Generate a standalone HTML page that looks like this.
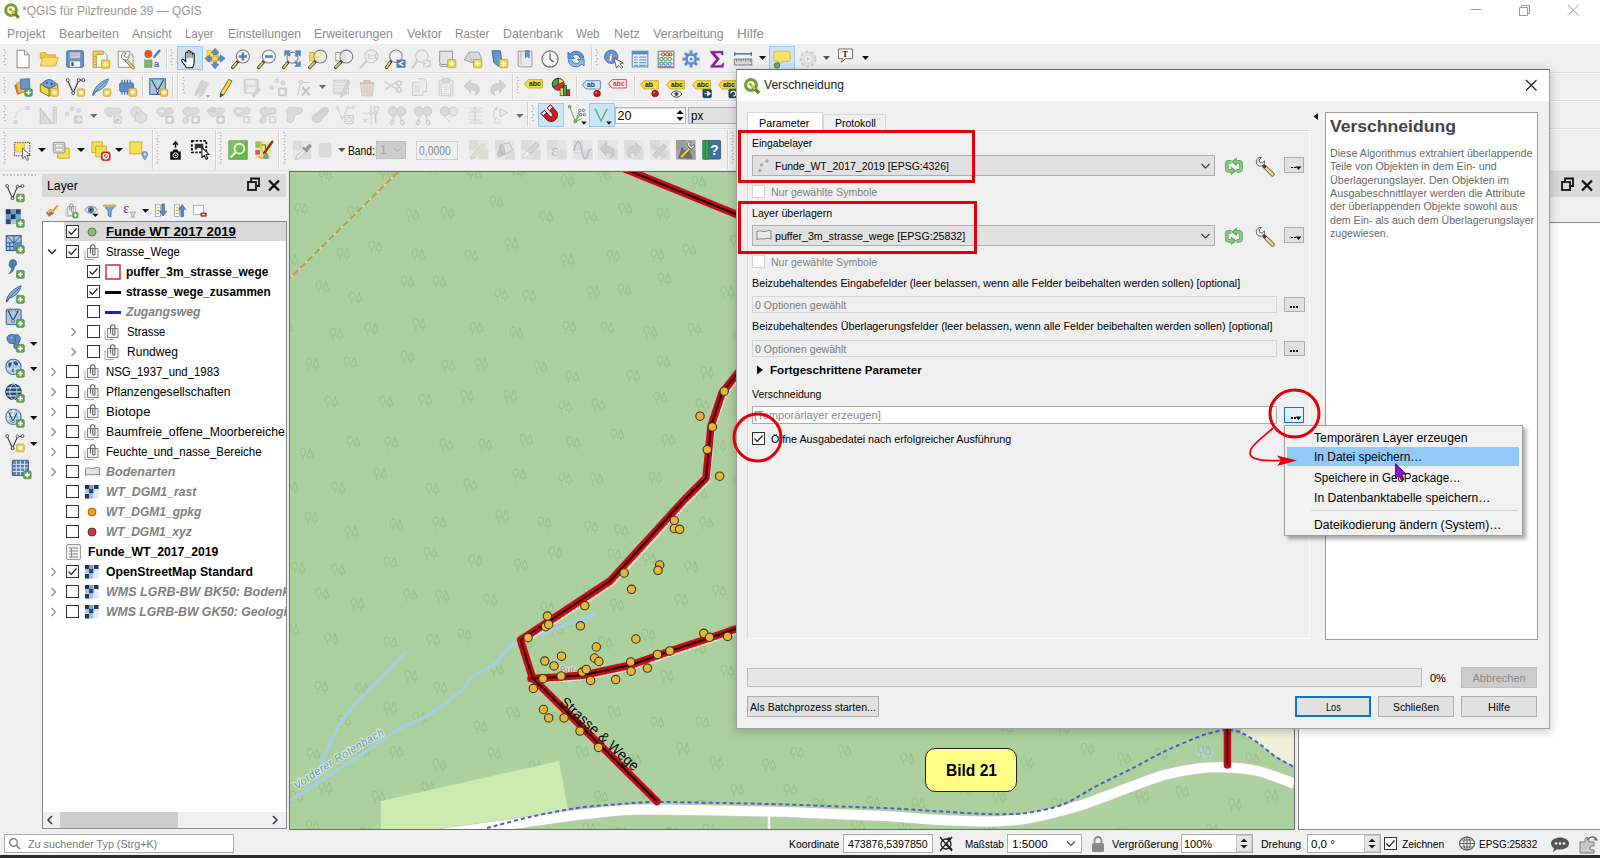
<!DOCTYPE html>
<html lang="de"><head><meta charset="utf-8"><title>QGIS</title>
<style>
html,body{margin:0;padding:0}
body{width:1600px;height:858px;overflow:hidden;position:relative;background:#f0f0f0;font-family:"Liberation Sans","DejaVu Sans",sans-serif}
.a{position:absolute;box-sizing:border-box;display:block}
.t{position:absolute;white-space:nowrap;line-height:20px;height:20px}
svg{overflow:visible}
</style></head><body>
<div class="a" style="left:0px;top:0px;width:1600px;height:44px;background:#ffffff;"></div>
<div class="a" style="left:0px;top:44px;width:1600px;height:128px;background:#f0f0f0;"></div>
<div class="a" style="left:0px;top:72px;width:1600px;height:1px;background:#dcdcdc;"></div>
<div class="a" style="left:0px;top:73px;width:1600px;height:1px;background:#fafafa;"></div>
<div class="a" style="left:0px;top:100px;width:1600px;height:1px;background:#dcdcdc;"></div>
<div class="a" style="left:0px;top:101px;width:1600px;height:1px;background:#fafafa;"></div>
<div class="a" style="left:0px;top:128px;width:1600px;height:1px;background:#dcdcdc;"></div>
<div class="a" style="left:0px;top:129px;width:1600px;height:1px;background:#fafafa;"></div>
<div class="a" style="left:0px;top:170px;width:1600px;height:1px;background:#e4e4e4;"></div>
<span class="t" id="t1" style="left:22px;top:1px;font-size:13px;color:#999999;transform:scaleX(0.9184);transform-origin:0 50%;">*QGIS für Pilzfreunde 39 — QGIS</span>
<svg class="a" style="left:2.5px;top:2px;" width="17" height="17" viewBox="0 0 20 20"><circle cx="9.5" cy="9.5" r="6.3" fill="none" stroke="#6aa32d" stroke-width="3.6"/>
<path d="M11 11 L18.5 18.5" stroke="#4d8a23" stroke-width="3.6" stroke-linecap="butt"/>
<path d="M9 9 L13 13" stroke="#f0c02c" stroke-width="2.4" stroke-linecap="round"/>
<circle cx="8.8" cy="8.8" r="1.6" fill="#ee7913"/></svg>
<svg class="a" style="left:1470px;top:0px;" width="130" height="22" viewBox="0 0 130 22"><path d="M0.500 9.500H11.500" stroke="#999" stroke-width="1"/>
<path d="M49.500 7.500h8v8h-8z M51.500 7.500v-2h8v8h-2" fill="none" stroke="#999" stroke-width="1"/>
<path d="M98 5l10.500 10.500M108.500 5l-10.500 10.500" stroke="#999" stroke-width="1"/></svg>
<span class="t" id="t2" style="left:7px;top:24px;font-size:13px;color:#8d8d8d;transform:scaleX(0.9500);transform-origin:0 50%;">Projekt</span>
<span class="t" id="t3" style="left:59px;top:24px;font-size:13px;color:#8d8d8d;transform:scaleX(0.9524);transform-origin:0 50%;">Bearbeiten</span>
<span class="t" id="t4" style="left:132px;top:24px;font-size:13px;color:#8d8d8d;transform:scaleX(0.9302);transform-origin:0 50%;">Ansicht</span>
<span class="t" id="t5" style="left:185px;top:24px;font-size:13px;color:#8d8d8d;transform:scaleX(0.8788);transform-origin:0 50%;">Layer</span>
<span class="t" id="t6" style="left:228px;top:24px;font-size:13px;color:#8d8d8d;transform:scaleX(0.9359);transform-origin:0 50%;">Einstellungen</span>
<span class="t" id="t7" style="left:314px;top:24px;font-size:13px;color:#8d8d8d;transform:scaleX(0.9405);transform-origin:0 50%;">Erweiterungen</span>
<span class="t" id="t8" style="left:407px;top:24px;font-size:13px;color:#8d8d8d;transform:scaleX(0.9459);transform-origin:0 50%;">Vektor</span>
<span class="t" id="t9" style="left:455px;top:24px;font-size:13px;color:#8d8d8d;transform:scaleX(0.8947);transform-origin:0 50%;">Raster</span>
<span class="t" id="t10" style="left:503px;top:24px;font-size:13px;color:#8d8d8d;transform:scaleX(0.9524);transform-origin:0 50%;">Datenbank</span>
<span class="t" id="t11" style="left:576px;top:24px;font-size:13px;color:#8d8d8d;transform:scaleX(0.8889);transform-origin:0 50%;">Web</span>
<span class="t" id="t12" style="left:614px;top:24px;font-size:13px;color:#8d8d8d;transform:scaleX(0.9630);transform-origin:0 50%;">Netz</span>
<span class="t" id="t13" style="left:653px;top:24px;font-size:13px;color:#8d8d8d;transform:scaleX(0.9595);transform-origin:0 50%;">Verarbeitung</span>
<span class="t" id="t14" style="left:737px;top:24px;font-size:13px;color:#8d8d8d;transform:scaleX(1.0385);transform-origin:0 50%;">Hilfe</span>
<div class="a" style="left:0px;top:830px;width:1600px;height:25px;background:#f0f0f0;"></div>
<div class="a" style="left:0px;top:855px;width:1600px;height:3px;background:#2b2b2b;"></div>
<div class="a" style="left:4px;top:834px;width:230px;height:19px;background:#fff;border:1px solid #adadad;"></div>
<svg class="a" style="left:8px;top:837px;" width="14" height="14" viewBox="0 0 14 14"><circle cx="5.5" cy="5.5" r="3.8" fill="none" stroke="#7a7a7a" stroke-width="1.3"/><path d="M8.3 8.3L12 12" stroke="#7a7a7a" stroke-width="1.5"/></svg>
<span class="t" id="t15" style="left:28px;top:834px;font-size:11px;color:#7a7a7a;transform:scaleX(0.9773);transform-origin:0 50%;">Zu suchender Typ (Strg+K)</span>
<span class="t" id="t16" style="left:789px;top:834px;font-size:11px;color:#000;transform:scaleX(0.9434);transform-origin:0 50%;">Koordinate</span>
<div class="a" style="left:843px;top:834px;width:90px;height:19px;background:#fff;border:1px solid #adadad;"></div>
<span class="t" id="t17" style="left:848px;top:834px;font-size:11px;color:#000;transform:scaleX(0.9639);transform-origin:0 50%;">473876,5397850</span>
<span class="t" id="t18" style="left:965px;top:834px;font-size:11px;color:#000;transform:scaleX(0.9070);transform-origin:0 50%;">Maßstab</span>
<div class="a" style="left:1007px;top:834px;width:75px;height:19px;background:#fff;border:1px solid #adadad;"></div>
<span class="t" id="t19" style="left:1012px;top:834px;font-size:11px;color:#000;transform:scaleX(1.0588);transform-origin:0 50%;">1:5000</span>
<svg class="a" style="left:1066px;top:840px;" width="10" height="8" viewBox="0 0 10 8"><path d="M1 1.5L5 5.5L9 1.5" fill="none" stroke="#444" stroke-width="1.1"/></svg>
<span class="t" id="t20" style="left:1112px;top:834px;font-size:11px;color:#000;transform:scaleX(0.9851);transform-origin:0 50%;">Vergrößerung</span>
<div class="a" style="left:1181px;top:834px;width:72px;height:19px;background:#fff;border:1px solid #adadad;"></div>
<span class="t" id="t21" style="left:1184px;top:834px;font-size:11px;color:#000;transform:scaleX(1.0000);transform-origin:0 50%;">100%</span>
<span class="t" id="t22" style="left:1261px;top:834px;font-size:11px;color:#000;transform:scaleX(0.9524);transform-origin:0 50%;">Drehung</span>
<div class="a" style="left:1307px;top:834px;width:74px;height:19px;background:#fff;border:1px solid #adadad;"></div>
<span class="t" id="t23" style="left:1311px;top:834px;font-size:11px;color:#000;transform:scaleX(1.0435);transform-origin:0 50%;">0,0 °</span>
<div class="a" style="left:1236px;top:835px;width:16px;height:17px;background:#e6e6e6;border:1px solid #c8c8c8;"></div>
<svg class="a" style="left:1239px;top:837px;" width="10" height="13" viewBox="0 0 10 13"><path d="M1.5 5L5 1.5L8.5 5z M1.5 8L5 11.5L8.5 8z" fill="#222"/></svg>
<div class="a" style="left:1364px;top:835px;width:16px;height:17px;background:#e6e6e6;border:1px solid #c8c8c8;"></div>
<svg class="a" style="left:1367px;top:837px;" width="10" height="13" viewBox="0 0 10 13"><path d="M1.5 5L5 1.5L8.5 5z M1.5 8L5 11.5L8.5 8z" fill="#222"/></svg>
<div class="a" style="left:1384px;top:837px;width:13px;height:13px;background:#fff;border:1px solid #333;"></div>
<svg class="a" style="left:1384px;top:837px;" width="13" height="13" viewBox="0 0 13 13"><path d="M2.5 6.5L5.3 9.3L10.5 3.5" fill="none" stroke="#222" stroke-width="1.2"/></svg>
<span class="t" id="t24" style="left:1402px;top:834px;font-size:11px;color:#000;transform:scaleX(0.9333);transform-origin:0 50%;">Zeichnen</span>
<svg class="a" style="left:1457px;top:834px;" width="20" height="19" viewBox="0 0 20 19"><ellipse cx="10" cy="9.5" rx="7.5" ry="6.5" fill="#f4f4f4" stroke="#555" stroke-width="1.1"/><ellipse cx="10" cy="9.5" rx="3.3" ry="6.5" fill="none" stroke="#555" stroke-width="0.9"/><path d="M2.5 9.5h15M4 6h12M4 13h12M10 3v13" stroke="#555" stroke-width="0.9"/></svg>
<span class="t" id="t25" style="left:1479px;top:834px;font-size:11px;color:#000;transform:scaleX(0.9062);transform-origin:0 50%;">EPSG:25832</span>
<svg class="a" style="left:1549px;top:835px;" width="22" height="19" viewBox="0 0 22 19"><path d="M2 8.5c0-3.6 4-6 9-6s9 2.4 9 6-4 6-9 6c-1 0-2-.1-2.8-.3L4 17l1-4C3.200 12 2 10.400 2 8.500z" fill="#555"/><circle cx="7" cy="8.500" r="1.300" fill="#fff"/><circle cx="11" cy="8.500" r="1.300" fill="#fff"/><circle cx="15" cy="8.500" r="1.300" fill="#fff"/></svg>
<svg class="a" style="left:1577px;top:834px;" width="22" height="20" viewBox="0 0 22 20"><path d="M3 8h5v-2.500a2 2 0 1 1 4 0V8h5v4h-2a2 2 0 1 0 0 4h2v3H3z" fill="#c9c9c9" stroke="#777" stroke-width="1"/><path d="M10 6c4-5 9-3 10 0l-3-.5" fill="none" stroke="#666" stroke-width="1.300"/></svg>
<svg class="a" style="left:936px;top:834px;" width="20" height="20" viewBox="0 0 20 20"><path d="M4 3l12 14M16 3L4 17" stroke="#222" stroke-width="1.400"/><circle cx="10" cy="10" r="5" fill="none" stroke="#222" stroke-width="1.300"/><path d="M10 10l6 6" stroke="#222" stroke-width="2.200"/><circle cx="13" cy="5" r="1.800" fill="#222"/></svg>
<svg class="a" style="left:1090px;top:834px;" width="16" height="20" viewBox="0 0 16 20"><rect x="2" y="9" width="12" height="9" rx="1.500" fill="#8a8a8a"/><path d="M4.500 9V6.500a3.500 3.500 0 0 1 7 0V9" fill="none" stroke="#8a8a8a" stroke-width="1.800"/></svg>
<svg class="a" style="left:3px;top:49px;" width="3" height="19" viewBox="0 0 3 19"><rect x="0.6" y="0" width="1.300" height="1.300" fill="#b0b0b0"/><rect x="1.4" y="3" width="1.300" height="1.300" fill="#b0b0b0"/><rect x="0.6" y="6" width="1.300" height="1.300" fill="#b0b0b0"/><rect x="1.4" y="9" width="1.300" height="1.300" fill="#b0b0b0"/><rect x="0.6" y="12" width="1.300" height="1.300" fill="#b0b0b0"/><rect x="1.4" y="15" width="1.300" height="1.300" fill="#b0b0b0"/></svg>
<svg class="a" style="left:11.5px;top:47.5px;" width="22.080000000000002" height="22.080000000000002" viewBox="0 0 24 24"><path d="M5.500 2.500h8l5 5v14h-13z" fill="#fff" stroke="#8a8a8a" stroke-width="1.100" stroke-linejoin="round"/><path d="M13.500 2.500v5h5" fill="#eee" stroke="#8a8a8a" stroke-width="1"/></svg>
<svg class="a" style="left:37.5px;top:47.5px;" width="22.080000000000002" height="22.080000000000002" viewBox="0 0 24 24"><path d="M2.500 6.500a1.500 1.500 0 0 1 1.500-1.500h4.500l2 2.500h8.500v4h-16.500z" fill="#eec84a" stroke="#d4a92c" stroke-width="1"/><path d="M2.500 19.500l2.500-9.500h17l-3 9.500z" fill="#f9dc64" stroke="#d9b23a" stroke-width="1" stroke-linejoin="round"/></svg>
<svg class="a" style="left:63.5px;top:47.5px;" width="22.080000000000002" height="22.080000000000002" viewBox="0 0 24 24"><rect x="3" y="3" width="18" height="18" rx="2" fill="#6c96c6" stroke="#3e6ca3" stroke-width="1.100"/><rect x="6.500" y="4.500" width="11" height="6.500" fill="#d8d8d8" stroke="#9a9a9a" stroke-width="0.600"/><path d="M7.500 6.500h9M7.500 8.500h9" stroke="#a8a8a8" stroke-width="1"/><rect x="6.500" y="14.500" width="11" height="6" fill="#f4f4f4"/><rect x="8" y="15.500" width="2.500" height="4" fill="#2b4c77"/></svg>
<svg class="a" style="left:89.5px;top:47.5px;" width="22.080000000000002" height="22.080000000000002" viewBox="0 0 24 24"><path d="M3.500 3.500h11l4 4v13.500h-15z" fill="#fbfbfb" stroke="#9a9a9a" stroke-width="1"/><path d="M3.500 3.500h11v3.500h-7.500v14h-3.500z" fill="#f2d65a" stroke="#c9a52a" stroke-width="1"/><path d="M5 9h1.500M5 12h1.500M5 15h1.500M5 18h1.500M9 5v1.200M12 5v1.200" stroke="#b08a1a" stroke-width="0.800"/><rect x="12.5" y="13" width="9" height="9" rx="1.200" fill="#ecd040" stroke="#c9a52a" stroke-width="0.900"/><path d="M17 14.4v6.2M13.9 17.5h6.2M14.8 15.3l4.4 4.4M19.2 15.3l-4.4 4.4" stroke="#fffdf0" stroke-width="1.050"/></svg>
<svg class="a" style="left:115.0px;top:47.5px;" width="22.080000000000002" height="22.080000000000002" viewBox="0 0 24 24"><path d="M3.500 3.500h12l4 4v13.500h-16z" fill="#fbfbfb" stroke="#8f8f8f" stroke-width="1"/><path d="M15.500 3.500v4h4" fill="#e8e8e8" stroke="#8f8f8f" stroke-width="0.900"/><path d="M13 12l8 8.500a1.500 1.500 0 0 1-2.200 2L11 14z" fill="#e8cf6a" stroke="#7d6a2a" stroke-width="0.900"/><path d="M7.500 7a3.800 3.800 0 0 1 5-1.500l-2.300 2.300l.8 2l2 .5l2.200-2.200a3.800 3.800 0 0 1-5.200 4.700a3.800 3.800 0 0 1-2.500-5.800z" fill="#f0f0f0" stroke="#6b6b6b" stroke-width="0.900"/></svg>
<svg class="a" style="left:140.5px;top:47.5px;" width="22.080000000000002" height="22.080000000000002" viewBox="0 0 24 24"><circle cx="8" cy="6.500" r="4.300" fill="#e1552b"/><rect x="4" y="13" width="8" height="8" fill="#78b37a" stroke="#5a9a5c" stroke-width="0.600"/><path d="M14.500 9.500l5.500-6.500" stroke="#4f7fb8" stroke-width="2.600" stroke-linecap="round"/><text x="14.200" y="21" font-size="10" font-family="Liberation Sans,sans-serif" fill="#333">a</text></svg>
<div class="a" style="left:166px;top:47px;width:1px;height:23px;background:#d2d2d2;"></div>
<div class="a" style="left:167px;top:47px;width:1px;height:23px;background:#fbfbfb;"></div>
<svg class="a" style="left:170px;top:49px;" width="3" height="19" viewBox="0 0 3 19"><rect x="0.6" y="0" width="1.300" height="1.300" fill="#b0b0b0"/><rect x="1.4" y="3" width="1.300" height="1.300" fill="#b0b0b0"/><rect x="0.6" y="6" width="1.300" height="1.300" fill="#b0b0b0"/><rect x="1.4" y="9" width="1.300" height="1.300" fill="#b0b0b0"/><rect x="0.6" y="12" width="1.300" height="1.300" fill="#b0b0b0"/><rect x="1.4" y="15" width="1.300" height="1.300" fill="#b0b0b0"/></svg>
<div class="a" style="left:177px;top:46px;width:26px;height:24px;background:#cce4f7;border:1px solid #99c9ef;"></div>
<svg class="a" style="left:178.5px;top:47.5px;" width="22.080000000000002" height="22.080000000000002" viewBox="0 0 24 24"><path d="M8.300 21.500c-1.800-2.300-4-5.200-5.200-7.400c-.7-1.400 1-2.500 2.200-1.200l2 2.300V5.700c0-1.700 2.300-1.700 2.300 0V4c0-1.700 2.400-1.700 2.400 0v1.300c0-1.600 2.300-1.600 2.300 0v1.600c0-1.500 2.200-1.500 2.200 0v8.600c0 2.500-.9 4.300-1.700 6z" fill="#fff" stroke="#111" stroke-width="1.150" stroke-linejoin="round"/><path d="M9.600 6V11M12 5.500V11M14.300 7V11" stroke="#111" stroke-width="0.800"/></svg>
<svg class="a" style="left:204.0px;top:47.5px;" width="22.080000000000002" height="22.080000000000002" viewBox="0 0 24 24"><rect x="3.200" y="2.800" width="12" height="12" fill="#f5e04e" stroke="#d9b82e" stroke-width="0.800"/><path d="M12 0.300l4 5.200h-2.300v2h-3.400v-2h-2.300zM12 22.700l4-5.200h-2.300v-2h-3.400v2h-2.300zM1 11.500l5.200-4v2.300h2v3.400h-2v2.300zM23 11.500l-5.200-4v2.300h-2v3.400h2v2.300z" fill="#5b8cc4" stroke="#3f6da3" stroke-width="0.700" stroke-linejoin="round"/><rect x="9.800" y="9.300" width="4.400" height="4.400" fill="#f5e04e" stroke="#c9a52a" stroke-width="0.700"/></svg>
<svg class="a" style="left:229.5px;top:47.5px;" width="22.080000000000002" height="22.080000000000002" viewBox="0 0 24 24"><path d="M8.746 14.554L2.800 21.200" stroke="#3a3a2a" stroke-width="3.400" stroke-linecap="round"/><path d="M7.146 16.154L3.100 20.900" stroke="#f0d24a" stroke-width="1.900" stroke-linecap="round"/><circle cx="14" cy="9.3" r="7.1" fill="#f4f4f4" stroke="#7c7c7c" stroke-width="1.150"/><path d="M14 5v8.600M9.700 9.300h8.600" stroke="#4f7fc0" stroke-width="2.700"/></svg>
<svg class="a" style="left:255.5px;top:47.5px;" width="22.080000000000002" height="22.080000000000002" viewBox="0 0 24 24"><path d="M8.746 14.554L2.800 21.200" stroke="#3a3a2a" stroke-width="3.400" stroke-linecap="round"/><path d="M7.146 16.154L3.100 20.900" stroke="#f0d24a" stroke-width="1.900" stroke-linecap="round"/><circle cx="14" cy="9.3" r="7.1" fill="#f4f4f4" stroke="#7c7c7c" stroke-width="1.150"/><path d="M9.700 9.300h8.600" stroke="#5b87c0" stroke-width="2.900"/></svg>
<svg class="a" style="left:281.0px;top:47.5px;" width="22.080000000000002" height="22.080000000000002" viewBox="0 0 24 24"><path d="M8.06 14.94L2.800 21.200" stroke="#3a3a2a" stroke-width="3.400" stroke-linecap="round"/><path d="M6.46 16.54L3.100 20.900" stroke="#f0d24a" stroke-width="1.900" stroke-linecap="round"/><circle cx="12.5" cy="10.5" r="6" fill="#f4f4f4" stroke="#7c7c7c" stroke-width="1.150"/><path d="M4 3h6l-2 2l2.500 2.500l-1.500 1.500l-2.500-2.500l-2.500 2zM21 3v6l-2-2l-2.500 2.500l-1.500-1.500l2.500-2.500l-2-2.500zM21 20h-6l2-2l-2.500-2.500l1.500-1.500l2.500 2.500l2.500-2z" fill="#5b8cc4" stroke="#3f6da3" stroke-width="0.700"/></svg>
<svg class="a" style="left:307.0px;top:47.5px;" width="22.080000000000002" height="22.080000000000002" viewBox="0 0 24 24"><rect x="3" y="5" width="8" height="9" fill="#f5e04e" stroke="#c9a52a" stroke-width="0.800"/><path d="M9.32 14.48L2.800 21.200" stroke="#3a3a2a" stroke-width="3.400" stroke-linecap="round"/><path d="M7.72 16.08L3.100 20.900" stroke="#f0d24a" stroke-width="1.900" stroke-linecap="round"/><circle cx="14.5" cy="9.3" r="7" fill="#f6f4e6" stroke="#7c7c7c" stroke-width="1.150"/><path d="M14.500 2.900a6.400 6.400 0 0 0 0 12.800z" fill="#efe6a8" opacity="0.800"/></svg>
<svg class="a" style="left:332.5px;top:47.5px;" width="22.080000000000002" height="22.080000000000002" viewBox="0 0 24 24"><rect x="3" y="5" width="8" height="9" fill="#f4f4f4" stroke="#8a8a8a" stroke-width="0.900"/><path d="M9.32 14.48L2.800 21.200" stroke="#3a3a2a" stroke-width="3.400" stroke-linecap="round"/><path d="M7.72 16.08L3.100 20.900" stroke="#f0d24a" stroke-width="1.900" stroke-linecap="round"/><circle cx="14.5" cy="9.3" r="7" fill="#f7f7f7" stroke="#7c7c7c" stroke-width="1.150"/><path d="M14.500 2.900a6.400 6.400 0 0 0 0 12.800z" fill="#dcdcdc" opacity="0.800"/></svg>
<svg class="a" style="left:358.0px;top:47.5px;" width="22.080000000000002" height="22.080000000000002" viewBox="0 0 24 24"><path d="M9.32 14.18L2.800 21.200" stroke="#cfcfcf" stroke-width="2.600" stroke-linecap="round"/><circle cx="14.5" cy="9" r="7" fill="#eeeeee" stroke="#c8c8c8" stroke-width="1.200"/><text x="9.600" y="12" font-size="8" font-weight="bold" font-family="Liberation Sans,sans-serif" fill="#c9c9c9">1:1</text></svg>
<svg class="a" style="left:384.0px;top:47.5px;" width="22.080000000000002" height="22.080000000000002" viewBox="0 0 24 24"><path d="M7.968 14.032L2.800 21.200" stroke="#3a3a2a" stroke-width="3.400" stroke-linecap="round"/><path d="M6.368 15.632L3.100 20.900" stroke="#f0d24a" stroke-width="1.900" stroke-linecap="round"/><circle cx="13" cy="9" r="6.8" fill="#eef1f5" stroke="#8a8a8a" stroke-width="1.150"/><rect x="14" y="13" width="9" height="8" fill="#4f7fb8" stroke="#3f6da3" stroke-width="0.600"/><path d="M21 14.500l-4.500 2.500l4.500 2.500" fill="none" stroke="#fff" stroke-width="1.500"/></svg>
<svg class="a" style="left:410.0px;top:47.5px;" width="22.080000000000002" height="22.080000000000002" viewBox="0 0 24 24"><path d="M7.968 14.032L2.800 21.200" stroke="#cfcfcf" stroke-width="2.600" stroke-linecap="round"/><circle cx="13" cy="9" r="6.8" fill="#eeeeee" stroke="#c8c8c8" stroke-width="1.200"/><rect x="14" y="13" width="9" height="8" fill="#d4d4d4"/><path d="M16 14.500l4.500 2.500l-4.500 2.500" fill="none" stroke="#f6f6f6" stroke-width="1.500"/></svg>
<svg class="a" style="left:436.0px;top:47.5px;" width="22.080000000000002" height="22.080000000000002" viewBox="0 0 24 24"><path d="M4 3.500h14v14.500h-11.500a2.500 2.500 0 0 1-2.500-2.500z" fill="#e4e4e4" stroke="#8f8f8f" stroke-width="1"/><path d="M4 17.500a2 2 0 0 0 2 2.500h12" fill="none" stroke="#8f8f8f" stroke-width="1"/><rect x="12.5" y="12.5" width="9" height="9" rx="1.200" fill="#ecd040" stroke="#c9a52a" stroke-width="0.900"/><path d="M17 13.9v6.2M13.9 17h6.2M14.8 14.8l4.4 4.4M19.2 14.8l-4.4 4.4" stroke="#fffdf0" stroke-width="1.050"/></svg>
<svg class="a" style="left:462.0px;top:47.5px;" width="22.080000000000002" height="22.080000000000002" viewBox="0 0 24 24"><path d="M2.500 13l5-8.500h11l3 8.500l-8 3.500z" fill="#d9d9d9" stroke="#9a9a9a" stroke-width="1" stroke-linejoin="round"/><path d="M7.500 4.500l2 8l12 .5M9.500 12.500l4 4" fill="none" stroke="#b0b0b0" stroke-width="0.800"/><rect x="12.5" y="12.5" width="9" height="9" rx="1.200" fill="#ecd040" stroke="#c9a52a" stroke-width="0.900"/><path d="M17 13.9v6.2M13.9 17h6.2M14.8 14.8l4.4 4.4M19.2 14.8l-4.4 4.4" stroke="#fffdf0" stroke-width="1.050"/></svg>
<svg class="a" style="left:488.0px;top:47.5px;" width="22.080000000000002" height="22.080000000000002" viewBox="0 0 24 24"><path d="M6 3h9v12.500l-4.500 4.500l-4.500-4.500z" fill="#6a95c6" stroke="#3f6da3" stroke-width="1" stroke-linejoin="round" transform="skewX(8) translate(-2 0)"/><rect x="12.5" y="12.5" width="9" height="9" rx="1.200" fill="#ecd040" stroke="#c9a52a" stroke-width="0.900"/><path d="M17 13.9v6.2M13.9 17h6.2M14.8 14.8l4.4 4.4M19.2 14.8l-4.4 4.4" stroke="#fffdf0" stroke-width="1.050"/></svg>
<svg class="a" style="left:513.5px;top:47.5px;" width="22.080000000000002" height="22.080000000000002" viewBox="0 0 24 24"><path d="M4.500 3.500h15v17h-12.500a2.500 2.500 0 0 1-2.500-2.500z" fill="#e9e9e9" stroke="#8f8f8f" stroke-width="1"/><path d="M7.500 3.500v14.500" stroke="#b5b5b5" stroke-width="1"/><path d="M12.500 3h4v8l-2-2l-2 2z" fill="#6a95c6" stroke="#3f6da3" stroke-width="0.800"/></svg>
<svg class="a" style="left:539.0px;top:47.5px;" width="22.080000000000002" height="22.080000000000002" viewBox="0 0 24 24"><circle cx="12" cy="12" r="8.800" fill="#fafafa" stroke="#707070" stroke-width="1.300"/><path d="M12 6v6.200l4 3.300" fill="none" stroke="#555" stroke-width="1.300"/><path d="M12 4v1.500M12 18.500v1.500M4 12h1.500M18.500 12h1.500" stroke="#999" stroke-width="0.900"/></svg>
<svg class="a" style="left:565.0px;top:47.5px;" width="22.080000000000002" height="22.080000000000002" viewBox="0 0 24 24"><path d="M20.500 11a8.500 8.500 0 0 0-15-4.500l-2.300-2.200v7.200h7.200l-2.500-2.500a5 5 0 0 1 8.800 2z" fill="#5b96d8" stroke="#2f6fb5" stroke-width="0.900" stroke-linejoin="round"/><path d="M3.500 13a8.500 8.500 0 0 0 15 4.500l2.300 2.200v-7.200h-7.200l2.500 2.500a5 5 0 0 1-8.800-2z" fill="#8fbcea" stroke="#2f6fb5" stroke-width="0.900" stroke-linejoin="round"/></svg>
<div class="a" style="left:591px;top:47px;width:1px;height:23px;background:#d2d2d2;"></div>
<div class="a" style="left:592px;top:47px;width:1px;height:23px;background:#fbfbfb;"></div>
<svg class="a" style="left:595px;top:49px;" width="3" height="19" viewBox="0 0 3 19"><rect x="0.6" y="0" width="1.300" height="1.300" fill="#b0b0b0"/><rect x="1.4" y="3" width="1.300" height="1.300" fill="#b0b0b0"/><rect x="0.6" y="6" width="1.300" height="1.300" fill="#b0b0b0"/><rect x="1.4" y="9" width="1.300" height="1.300" fill="#b0b0b0"/><rect x="0.6" y="12" width="1.300" height="1.300" fill="#b0b0b0"/><rect x="1.4" y="15" width="1.300" height="1.300" fill="#b0b0b0"/></svg>
<svg class="a" style="left:602.0px;top:47.5px;" width="22.080000000000002" height="22.080000000000002" viewBox="0 0 24 24"><circle cx="10" cy="9.500" r="7.300" fill="#6a95c6" stroke="#4474ad" stroke-width="1"/><text x="7.500" y="13.800" font-size="12" font-weight="bold" font-style="italic" font-family="Liberation Serif,serif" fill="#fff">i</text><path d="M13 11l2.800 11l2.200-3.300l3.200 3.500l1.500-1.400l-3.200-3.500l3.800-1z" fill="#fff" stroke="#555" stroke-width="1" stroke-linejoin="round"/></svg>
<svg class="a" style="left:628.5px;top:47.5px;" width="22.080000000000002" height="22.080000000000002" viewBox="0 0 24 24"><rect x="3.500" y="3.500" width="17" height="17" fill="#eef4fb" stroke="#5b8cc4" stroke-width="1.200"/><rect x="3.500" y="3.500" width="17" height="3.500" fill="#5b8cc4"/><path d="M5.500 10h4M11 10h8M5.500 13h4M11 13h8M5.500 16h4M11 16h8M5.500 18.800h4M11 18.800h8" stroke="#6d9bd0" stroke-width="1.300"/></svg>
<svg class="a" style="left:654.5px;top:47.5px;" width="22.080000000000002" height="22.080000000000002" viewBox="0 0 24 24"><rect x="3.500" y="3.500" width="17" height="17" fill="#f4f4f4" stroke="#7d7d7d" stroke-width="1.200"/><path d="M3 21h18" stroke="#8a8a8a" stroke-width="2"/><path d="M4 7h16M4 12h16M4 17h16" stroke="#888" stroke-width="0.800"/><circle cx="9" cy="7" r="1.800" fill="#fff" stroke="#d9383a" stroke-width="1.100"/><circle cx="13.500" cy="7" r="1.800" fill="#fff" stroke="#d9383a" stroke-width="1.100"/><circle cx="17" cy="7" r="1.500" fill="#fff" stroke="#d9383a" stroke-width="1.100"/><circle cx="7" cy="12" r="1.800" fill="#fff" stroke="#4aa24a" stroke-width="1.100"/><circle cx="11.500" cy="12" r="1.800" fill="#fff" stroke="#4aa24a" stroke-width="1.100"/><circle cx="16" cy="12" r="1.800" fill="#fff" stroke="#4aa24a" stroke-width="1.100"/><circle cx="7" cy="17" r="1.800" fill="#fff" stroke="#4a7fc0" stroke-width="1.100"/><circle cx="11.500" cy="17" r="1.800" fill="#fff" stroke="#4a7fc0" stroke-width="1.100"/><circle cx="16" cy="17" r="1.800" fill="#fff" stroke="#4a7fc0" stroke-width="1.100"/></svg>
<svg class="a" style="left:680.0px;top:47.5px;" width="22.080000000000002" height="22.080000000000002" viewBox="0 0 24 24"><path d="M17.00 12.00L21.30 12.00" stroke="#5b8fd0" stroke-width="3.200"/><path d="M15.54 15.54L18.58 18.58" stroke="#5b8fd0" stroke-width="3.200"/><path d="M12.00 17.00L12.00 21.30" stroke="#5b8fd0" stroke-width="3.200"/><path d="M8.46 15.54L5.42 18.58" stroke="#5b8fd0" stroke-width="3.200"/><path d="M7.00 12.00L2.70 12.00" stroke="#5b8fd0" stroke-width="3.200"/><path d="M8.46 8.46L5.42 5.42" stroke="#5b8fd0" stroke-width="3.200"/><path d="M12.00 7.00L12.00 2.70" stroke="#5b8fd0" stroke-width="3.200"/><path d="M15.54 8.46L18.58 5.42" stroke="#5b8fd0" stroke-width="3.200"/><circle cx="12" cy="12" r="5" fill="#f0f0f0" stroke="#5b8fd0" stroke-width="3"/><circle cx="12" cy="12" r="1.800" fill="#5b8fd0"/></svg>
<svg class="a" style="left:705.5px;top:47.5px;" width="22.080000000000002" height="22.080000000000002" viewBox="0 0 24 24"><path d="M5 3.500h13.500v4h-1.300c-.2-1.500-.8-2-2.500-2h-5.500l5.500 6.500l-6 7h6.500c1.800 0 2.500-.7 3-2.500h1.300l-.8 4.500h-13.700v-1.200l6.300-7.500l-6.300-7.500z" fill="#8b1a9a" stroke="#7a0f8a" stroke-width="0.500"/></svg>
<svg class="a" style="left:731.5px;top:47.5px;" width="22.080000000000002" height="22.080000000000002" viewBox="0 0 24 24"><path d="M3 6.500h18M3 4.500v4M21 4.500v4" stroke="#3f5f80" stroke-width="1.400" fill="none"/><rect x="2.500" y="12" width="19" height="6.500" fill="#d8d8d8" stroke="#7d7d7d" stroke-width="1"/><path d="M5 12v3M7.500 12v2M10 12v3M12.500 12v2M15 12v3M17.500 12v2M20 12v3" stroke="#666" stroke-width="0.800"/></svg>
<svg class="a" style="left:758.5px;top:56px;" width="7" height="4.5" viewBox="0 0 7 4.5"><path d="M0 0h7 l-3.5 4z" fill="#111"/></svg>
<div class="a" style="left:769px;top:46px;width:26px;height:24px;background:#cce4f7;border:1px solid #99c9ef;"></div>
<svg class="a" style="left:771.0px;top:47.5px;" width="22.080000000000002" height="22.080000000000002" viewBox="0 0 24 24"><path d="M5.500 3.500h13a2.500 2.500 0 0 1 2.500 2.500v6a2.500 2.500 0 0 1-2.500 2.500h-6.500l-3.500 4v-4h-3a2.500 2.500 0 0 1-2.500-2.500v-6a2.500 2.500 0 0 1 2.500-2.500z" fill="#f7e264" stroke="#d6b93a" stroke-width="1"/><circle cx="6.500" cy="19" r="2.800" fill="#78b06a" stroke="#4e8a44" stroke-width="1.200"/></svg>
<svg class="a" style="left:796.5px;top:47.5px;" width="22.080000000000002" height="22.080000000000002" viewBox="0 0 24 24"><circle cx="12" cy="12" r="8" fill="#e6e6e6" stroke="#cfcfcf" stroke-width="2.500" stroke-dasharray="3.500 2.200"/><circle cx="12" cy="12" r="4.500" fill="#f2f2f2" stroke="#cdcdcd" stroke-width="1"/><path d="M10.500 9.500v5l4-2.500z" fill="#c8c8c8"/></svg>
<svg class="a" style="left:823.0px;top:56px;" width="7" height="4.5" viewBox="0 0 7 4.5"><path d="M0 0h7 l-3.5 4z" fill="#555"/></svg>
<svg class="a" style="left:835.4px;top:45.4px;" width="21.12" height="21.12" viewBox="0 0 24 24"><path d="M4 4.500h16v11h-8l-5 4.500l1.500-4.500h-4.500z" fill="#fafafa" stroke="#707070" stroke-width="1.100" stroke-linejoin="round"/><text x="8.300" y="13.500" font-size="9.500" font-weight="bold" font-family="Liberation Serif,serif" fill="#222">T</text></svg>
<svg class="a" style="left:862.0px;top:56px;" width="7" height="4.5" viewBox="0 0 7 4.5"><path d="M0 0h7 l-3.5 4z" fill="#111"/></svg>
<svg class="a" style="left:3px;top:77px;" width="3" height="19" viewBox="0 0 3 19"><rect x="0.6" y="0" width="1.300" height="1.300" fill="#b0b0b0"/><rect x="1.4" y="3" width="1.300" height="1.300" fill="#b0b0b0"/><rect x="0.6" y="6" width="1.300" height="1.300" fill="#b0b0b0"/><rect x="1.4" y="9" width="1.300" height="1.300" fill="#b0b0b0"/><rect x="0.6" y="12" width="1.300" height="1.300" fill="#b0b0b0"/><rect x="1.4" y="15" width="1.300" height="1.300" fill="#b0b0b0"/></svg>
<svg class="a" style="left:11.5px;top:75.5px;" width="22.080000000000002" height="22.080000000000002" viewBox="0 0 24 24"><path d="M3 10l8-3l3 10l-8 3z" fill="#e1762b" stroke="#b65a1a" stroke-width="0.800"/><path d="M5 7.500l9-2l2 11l-9 2z" fill="#f2c14a" stroke="#c9972a" stroke-width="0.800"/><path d="M9 3.500l10-.5l.5 11l-10 .5z" fill="#6a95c6" stroke="#3f6da3" stroke-width="0.900"/><rect x="14" y="14" width="8" height="8" rx="1.500" fill="#5aa55e" stroke="#3a8540" stroke-width="0.800"/><path d="M18 15.500v5M15.500 18h5" stroke="#fff" stroke-width="1.700"/></svg>
<svg class="a" style="left:37.5px;top:75.5px;" width="22.080000000000002" height="22.080000000000002" viewBox="0 0 24 24"><path d="M2.500 9l9.500-5l9.500 5v8l-9.500 5l-9.500-5z" fill="#f2d84c" stroke="#7d6a1a" stroke-width="1" stroke-linejoin="round"/><path d="M2.500 9l9.500 5l9.500-5M12 14v8" fill="none" stroke="#7d6a1a" stroke-width="1"/><ellipse cx="12" cy="8.500" rx="6.500" ry="4.500" fill="#7aa6d6" stroke="#2f5f95" stroke-width="0.900"/><path d="M8 7c1.500-2 3-1 2.500.5s-2 1.500-2.500-.5zM13 8c1-1.500 3.500-1 3 1s-2.500 1-3-1z" fill="#2f5f95"/><rect x="13.5" y="13.5" width="8.5" height="8.5" rx="1.200" fill="#ecd040" stroke="#c9a52a" stroke-width="0.900"/><path d="M17.75 14.9v5.7M14.9 17.75h5.7M15.8 15.8l3.9 3.9M19.7 15.8l-3.9 3.9" stroke="#fffdf0" stroke-width="1.050"/></svg>
<svg class="a" style="left:63.5px;top:75.5px;" width="22.080000000000002" height="22.080000000000002" viewBox="0 0 24 24"><path d="M4 4.500l6 14l6-14h5" fill="none" stroke="#444" stroke-width="1.300"/><circle cx="4" cy="4.500" r="1.600" fill="#fff" stroke="#444" stroke-width="1"/><circle cx="10" cy="18.500" r="1.600" fill="#fff" stroke="#444" stroke-width="1"/><circle cx="16" cy="4.500" r="1.600" fill="#fff" stroke="#444" stroke-width="1"/><circle cx="21" cy="4.500" r="1.600" fill="#fff" stroke="#444" stroke-width="1"/><rect x="14.5" y="14" width="8" height="8" rx="1.200" fill="#ecd040" stroke="#c9a52a" stroke-width="0.900"/><path d="M18.5 15.4v5.2M15.9 18h5.2M16.8 16.3l3.4 3.4M20.2 16.3l-3.4 3.4" stroke="#fffdf0" stroke-width="1.050"/></svg>
<svg class="a" style="left:89.5px;top:75.5px;" width="22.080000000000002" height="22.080000000000002" viewBox="0 0 24 24"><path d="M3 21c1-7 6-14 17-18c-1 6-6 12-14 14z" fill="#8fb4dc" stroke="#3f6da3" stroke-width="1" stroke-linejoin="round"/><path d="M3.500 21.500c3-6 8-11 14.500-16" fill="none" stroke="#3f6da3" stroke-width="0.900"/><rect x="14.5" y="14" width="8" height="8" rx="1.200" fill="#ecd040" stroke="#c9a52a" stroke-width="0.900"/><path d="M18.5 15.4v5.2M15.9 18h5.2M16.8 16.3l3.4 3.4M20.2 16.3l-3.4 3.4" stroke="#fffdf0" stroke-width="1.050"/></svg>
<svg class="a" style="left:115.5px;top:75.5px;" width="22.080000000000002" height="22.080000000000002" viewBox="0 0 24 24"><rect x="4" y="7.500" width="15" height="9.500" rx="1.500" fill="#5b8cc4" stroke="#3f6da3" stroke-width="0.900"/><path d="M6.500 4v3.500M9.500 4v3.500M12.500 4v3.500M15.500 4v3.500M6.500 17v3.500M9.500 17v3.500M12.500 17v3.500" stroke="#3f6da3" stroke-width="1.300"/><rect x="14" y="13.5" width="8.5" height="8.5" rx="1.200" fill="#ecd040" stroke="#c9a52a" stroke-width="0.900"/><path d="M18.25 14.9v5.7M15.4 17.75h5.7M16.3 15.8l3.9 3.9M20.2 15.8l-3.9 3.9" stroke="#fffdf0" stroke-width="1.050"/></svg>
<div class="a" style="left:142px;top:76px;width:1px;height:21px;background:#d2d2d2;"></div>
<div class="a" style="left:143px;top:76px;width:1px;height:21px;background:#fbfbfb;"></div>
<svg class="a" style="left:147.0px;top:75.5px;" width="22.080000000000002" height="22.080000000000002" viewBox="0 0 24 24"><rect x="3" y="3" width="17" height="17" fill="#a9c6e6" stroke="#3f6da3" stroke-width="1.200"/><path d="M5 4l6.500 12l6.500-12M11.500 16v4" fill="none" stroke="#444" stroke-width="1.200"/><circle cx="11.500" cy="16" r="1.500" fill="#fff" stroke="#444" stroke-width="0.900"/><rect x="14.5" y="14" width="8" height="8" rx="1.200" fill="#ecd040" stroke="#c9a52a" stroke-width="0.900"/><path d="M18.5 15.4v5.2M15.9 18h5.2M16.8 16.3l3.4 3.4M20.2 16.3l-3.4 3.4" stroke="#fffdf0" stroke-width="1.050"/></svg>
<div class="a" style="left:172px;top:76px;width:1px;height:21px;background:#d2d2d2;"></div>
<div class="a" style="left:173px;top:76px;width:1px;height:21px;background:#fbfbfb;"></div>
<div class="a" style="left:177px;top:74px;width:1px;height:25px;background:#d2d2d2;"></div>
<div class="a" style="left:178px;top:74px;width:1px;height:25px;background:#fbfbfb;"></div>
<svg class="a" style="left:181.5px;top:77px;" width="3" height="19" viewBox="0 0 3 19"><rect x="0.6" y="0" width="1.300" height="1.300" fill="#b0b0b0"/><rect x="1.4" y="3" width="1.300" height="1.300" fill="#b0b0b0"/><rect x="0.6" y="6" width="1.300" height="1.300" fill="#b0b0b0"/><rect x="1.4" y="9" width="1.300" height="1.300" fill="#b0b0b0"/><rect x="0.6" y="12" width="1.300" height="1.300" fill="#b0b0b0"/><rect x="1.4" y="15" width="1.300" height="1.300" fill="#b0b0b0"/></svg>
<svg class="a" style="left:191.0px;top:75.5px;" width="22.080000000000002" height="22.080000000000002" viewBox="0 0 24 24"><path d="M5 18l6.500-13.500l3 1.500l-6.500 13.500l-3.500 2zM10 19l6-12.500l3 1.500l-6 12.500l-3.500 2z" fill="#d3d3d3" stroke="#c3c3c3" stroke-width="0.800"/><path d="M16 21h5l-2.500 2.500z" fill="#9a9a9a"/></svg>
<svg class="a" style="left:215.0px;top:75.5px;" width="22.080000000000002" height="22.080000000000002" viewBox="0 0 24 24"><path d="M6 18.500l9-15l3.500 2l-9 15l-4 2.500z" fill="#f2d84c" stroke="#7d6a1a" stroke-width="1" stroke-linejoin="round"/><path d="M6 18.500l3.500 2l-4 2.500z" fill="#444"/><path d="M9 14l3.300 2" stroke="#b99a2a" stroke-width="0.001"/></svg>
<svg class="a" style="left:240.5px;top:75.5px;" width="22.080000000000002" height="22.080000000000002" viewBox="0 0 24 24"><rect x="3.500" y="3.500" width="15" height="15" rx="1.500" fill="#dcdcdc" stroke="#c3c3c3"/><rect x="6" y="4.500" width="9" height="5" fill="#ececec"/><rect x="6.500" y="12" width="9" height="6" fill="#ececec"/><path d="M12 21l7-8l2 1.800l-7 8z" fill="#d0d0d0" stroke="#c0c0c0" stroke-width="0.700"/></svg>
<svg class="a" style="left:266.5px;top:75.5px;" width="22.080000000000002" height="22.080000000000002" viewBox="0 0 24 24"><circle cx="5" cy="12.500" r="2" fill="#e3e3e3" stroke="#c6c6c6"/><circle cx="10.500" cy="5" r="2" fill="#e3e3e3" stroke="#c6c6c6"/><circle cx="17.500" cy="7.500" r="2" fill="#e3e3e3" stroke="#c6c6c6"/><rect x="12.5" y="13" width="8.5" height="8.5" rx="1.200" fill="#cfcfcf" stroke="#c0c0c0" stroke-width="0.800"/><path d="M16.75 14.5v5.5M14 17.25h5.5M14.5 15l4.5 4.5M19 15l-4.5 4.5" stroke="#f3f3f3" stroke-width="1.300"/></svg>
<svg class="a" style="left:292.5px;top:75.5px;" width="22.080000000000002" height="22.080000000000002" viewBox="0 0 24 24"><path d="M5 21l3.500-14h10" fill="none" stroke="#c8c8c8" stroke-width="1.100"/><circle cx="8.500" cy="6.500" r="1.800" fill="#ececec" stroke="#c3c3c3"/><path d="M10 12l8 9M18 12l-8 9" stroke="#c6c6c6" stroke-width="2.300"/></svg>
<svg class="a" style="left:319.0px;top:85px;" width="7" height="4.5" viewBox="0 0 7 4.5"><path d="M0 0h7 l-3.5 4z" fill="#666"/></svg>
<svg class="a" style="left:330.5px;top:75.5px;" width="22.080000000000002" height="22.080000000000002" viewBox="0 0 24 24"><rect x="3" y="4.500" width="16" height="15" fill="#dedede" stroke="#cdcdcd"/><path d="M3 8.500h16M3 12h16M3 15.500h16" stroke="#f0f0f0" stroke-width="1.200"/><path d="M11 20l7.500-15l2.500 1.300l-7.500 15l-3 1.500z" fill="#d6d6d6" stroke="#c3c3c3" stroke-width="0.800"/></svg>
<svg class="a" style="left:356.0px;top:75.5px;" width="22.080000000000002" height="22.080000000000002" viewBox="0 0 24 24"><path d="M5 8h14l-1.500 13.500h-11z" fill="#e6d6d6" stroke="#d2bcbc" stroke-width="1"/><path d="M4 7.500h16M9 5h6v2.500h-6z" fill="#e0d0d0" stroke="#cdb8b8" stroke-width="1.200"/><path d="M9 10.500v9M12 10.500v9M15 10.500v9" stroke="#d6c2c2" stroke-width="1"/></svg>
<svg class="a" style="left:382.0px;top:75.5px;" width="22.080000000000002" height="22.080000000000002" viewBox="0 0 24 24"><path d="M3 6l14 9M3 15l14-9" stroke="#cfcfcf" stroke-width="1.500"/><circle cx="18.500" cy="8" r="2.600" fill="none" stroke="#c6c6c6" stroke-width="1.300"/><circle cx="18.500" cy="15" r="2.600" fill="none" stroke="#c6c6c6" stroke-width="1.300"/></svg>
<svg class="a" style="left:408.5px;top:75.5px;" width="22.080000000000002" height="22.080000000000002" viewBox="0 0 24 24"><path d="M4 7h8l3 3v11h-11z" fill="#ececec" stroke="#c8c8c8"/><path d="M9 3h7l3 3v11h-4" fill="#ececec" stroke="#c8c8c8"/><path d="M6 12h6M6 14.500h6M6 17h6" stroke="#d0d0d0" stroke-width="0.900"/></svg>
<svg class="a" style="left:434.5px;top:75.5px;" width="22.080000000000002" height="22.080000000000002" viewBox="0 0 24 24"><rect x="4.500" y="4.500" width="15" height="17" rx="1" fill="#e6e6e6" stroke="#c8c8c8"/><rect x="8.500" y="2.500" width="7" height="4" fill="#dadada" stroke="#c8c8c8"/><rect x="7" y="8.500" width="10" height="11" fill="#f1f1f1" stroke="#d0d0d0" stroke-width="0.800"/><path d="M9 12h6M9 14.500h6M9 17h4" stroke="#d0d0d0" stroke-width="0.900"/></svg>
<svg class="a" style="left:460.5px;top:75.5px;" width="22.080000000000002" height="22.080000000000002" viewBox="0 0 24 24"><path d="M3.500 10.500l7-6.500v4c6 0 9.500 3 9.500 7c0 3-2 5-5 6c2-2 2.500-6-4.500-6v4z" fill="#d2d2d2" stroke="#c4c4c4" stroke-width="0.800" stroke-linejoin="round"/></svg>
<svg class="a" style="left:486.5px;top:75.5px;" width="22.080000000000002" height="22.080000000000002" viewBox="0 0 24 24"><path d="M20.500 10.500l-7-6.500v4c-6 0-9.500 3-9.500 7c0 3 2 5 5 6c-2-2-2.500-6 4.500-6v4z" fill="#d2d2d2" stroke="#c4c4c4" stroke-width="0.800" stroke-linejoin="round"/></svg>
<div class="a" style="left:511.5px;top:74px;width:1px;height:25px;background:#d2d2d2;"></div>
<div class="a" style="left:512.5px;top:74px;width:1px;height:25px;background:#fbfbfb;"></div>
<svg class="a" style="left:516px;top:77px;" width="3" height="19" viewBox="0 0 3 19"><rect x="0.6" y="0" width="1.300" height="1.300" fill="#b0b0b0"/><rect x="1.4" y="3" width="1.300" height="1.300" fill="#b0b0b0"/><rect x="0.6" y="6" width="1.300" height="1.300" fill="#b0b0b0"/><rect x="1.4" y="9" width="1.300" height="1.300" fill="#b0b0b0"/><rect x="0.6" y="12" width="1.300" height="1.300" fill="#b0b0b0"/><rect x="1.4" y="15" width="1.300" height="1.300" fill="#b0b0b0"/></svg>
<svg class="a" style="left:523.0px;top:75.5px;" width="22.080000000000002" height="22.080000000000002" viewBox="0 0 24 24"><path d="M1.5 8.500l4-4.500h15.500v9h-15.500z" fill="#f5dc3c" stroke="#c9a52a" stroke-width="1" stroke-linejoin="round"/><text x="6.5" y="11.300" font-size="7.500" font-weight="bold" font-family="Liberation Sans,sans-serif" fill="#222">abc</text></svg>
<svg class="a" style="left:549.5px;top:76.0px;" width="22.080000000000002" height="22.080000000000002" viewBox="0 0 24 24"><circle cx="9" cy="9" r="6.500" fill="#d92b2b" stroke="#222" stroke-width="0.900"/><path d="M9 9V2.500a6.500 6.500 0 0 1 6 4z" fill="#f2d84c" stroke="#222" stroke-width="0.700"/><path d="M9 9l-5.500 3.500a6.500 6.500 0 0 1 5.500-10z" fill="#3fa34a" stroke="#222" stroke-width="0.700"/><rect x="11" y="13" width="3.500" height="8.500" fill="#f2d84c" stroke="#222" stroke-width="0.600"/><rect x="14.500" y="10" width="3.500" height="11.500" fill="#3fa34a" stroke="#222" stroke-width="0.600"/><rect x="18" y="15" width="3.500" height="6.500" fill="#d92b2b" stroke="#222" stroke-width="0.600"/></svg>
<div class="a" style="left:576px;top:76px;width:1px;height:21px;background:#d2d2d2;"></div>
<div class="a" style="left:577px;top:76px;width:1px;height:21px;background:#fbfbfb;"></div>
<svg class="a" style="left:581.0px;top:77.0px;" width="22.080000000000002" height="22.080000000000002" viewBox="0 0 24 24"><path d="M1.5 8.500l4-4.500h15.500v9h-15.500z" fill="#dbe8f7" stroke="#4f7fb8" stroke-width="1" stroke-linejoin="round"/><text x="6.5" y="11.300" font-size="7.500" font-weight="bold" font-family="Liberation Sans,sans-serif" fill="#1f3f6a">ab</text><path d="M17.500 9v7" stroke="#ddd" stroke-width="1.600"/><circle cx="17.500" cy="18" r="3.600" fill="#c01818" stroke="#7d0c0c" stroke-width="0.800"/><circle cx="16.500" cy="17" r="1" fill="#ef7a7a"/></svg>
<svg class="a" style="left:606.5px;top:75.5px;" width="22.080000000000002" height="22.080000000000002" viewBox="0 0 24 24"><path d="M1.5 8.500l4-4.500h15.500v9h-15.500z" fill="#fff" stroke="#d9302c" stroke-width="1" stroke-linejoin="round"/><text x="6.5" y="11.300" font-size="7.500" font-weight="bold" font-family="Liberation Sans,sans-serif" fill="#d9302c">abc</text></svg>
<div class="a" style="left:633.5px;top:76px;width:1px;height:21px;background:#d2d2d2;"></div>
<div class="a" style="left:634.5px;top:76px;width:1px;height:21px;background:#fbfbfb;"></div>
<svg class="a" style="left:639.0px;top:77.0px;" width="22.080000000000002" height="22.080000000000002" viewBox="0 0 24 24"><path d="M1.5 8.500l4-4.500h15.500v9h-15.500z" fill="#f5dc3c" stroke="#c9a52a" stroke-width="1" stroke-linejoin="round"/><text x="6.5" y="11.300" font-size="7.500" font-weight="bold" font-family="Liberation Sans,sans-serif" fill="#222">ab</text><path d="M17.500 9v7" stroke="#ddd" stroke-width="1.600"/><circle cx="17.500" cy="18" r="3.600" fill="#c01818" stroke="#7d0c0c" stroke-width="0.800"/><circle cx="16.500" cy="17" r="1" fill="#ef7a7a"/></svg>
<svg class="a" style="left:665.0px;top:77.0px;" width="22.080000000000002" height="22.080000000000002" viewBox="0 0 24 24"><path d="M1.5 8.500l4-4.500h15.500v9h-15.500z" fill="#f5dc3c" stroke="#c9a52a" stroke-width="1" stroke-linejoin="round"/><text x="6.5" y="11.300" font-size="7.500" font-weight="bold" font-family="Liberation Sans,sans-serif" fill="#222">abc</text><path d="M6.500 18.500c3-4.500 9-4.500 12 0c-3 4.500-9 4.500-12 0z" fill="#fff" stroke="#333" stroke-width="0.900"/><circle cx="12.500" cy="18.500" r="2.300" fill="#3f6da3"/><circle cx="12.500" cy="18.500" r="0.900" fill="#111"/></svg>
<svg class="a" style="left:691.0px;top:77.0px;" width="22.080000000000002" height="22.080000000000002" viewBox="0 0 24 24"><path d="M1.5 8.500l4-4.500h15.500v9h-15.500z" fill="#f5dc3c" stroke="#c9a52a" stroke-width="1" stroke-linejoin="round"/><text x="6.5" y="11.300" font-size="7.500" font-weight="bold" font-family="Liberation Sans,sans-serif" fill="#222">abc</text><rect x="13" y="13.500" width="9" height="9" rx="1" fill="#2d4a66" stroke="#1b3045" stroke-width="0.800"/><path d="M14.500 18h3.500v-2.500l3.300 2.500l-3.300 2.500v-2.500" fill="#fff" stroke="#fff" stroke-width="0.800"/></svg>
<svg class="a" style="left:717.0px;top:77.0px;" width="22.080000000000002" height="22.080000000000002" viewBox="0 0 24 24"><path d="M1.5 8.500l4-4.500h15.500v9h-15.500z" fill="#f5dc3c" stroke="#c9a52a" stroke-width="1" stroke-linejoin="round"/><text x="6.5" y="11.300" font-size="7.500" font-weight="bold" font-family="Liberation Sans,sans-serif" fill="#222">abc</text><rect x="13" y="13.500" width="9" height="9" rx="1" fill="#2d4a66" stroke="#1b3045" stroke-width="0.800"/><path d="M15 18a2.700 2.700 0 1 1 2.700 2.700" fill="none" stroke="#fff" stroke-width="1.300"/></svg>
<svg class="a" style="left:3px;top:105px;" width="3" height="19" viewBox="0 0 3 19"><rect x="0.6" y="0" width="1.300" height="1.300" fill="#b0b0b0"/><rect x="1.4" y="3" width="1.300" height="1.300" fill="#b0b0b0"/><rect x="0.6" y="6" width="1.300" height="1.300" fill="#b0b0b0"/><rect x="1.4" y="9" width="1.300" height="1.300" fill="#b0b0b0"/><rect x="0.6" y="12" width="1.300" height="1.300" fill="#b0b0b0"/><rect x="1.4" y="15" width="1.300" height="1.300" fill="#b0b0b0"/></svg>
<svg class="a" style="left:10.5px;top:104.0px;" width="22.080000000000002" height="22.080000000000002" viewBox="0 0 24 24"><path d="M5 19c-1-8 3-14 12-14.500" fill="none" stroke="#d0d0d0" stroke-width="1.200" stroke-dasharray="1.500 2.500"/><rect x="3.500" y="18" width="3" height="3" fill="#e4e4e4" stroke="#cdcdcd"/><rect x="17" y="3" width="3" height="3" fill="#e4e4e4" stroke="#cdcdcd"/></svg>
<svg class="a" style="left:37.0px;top:104.0px;" width="22.080000000000002" height="22.080000000000002" viewBox="0 0 24 24"><path d="M3.500 21V4.500l13 16.500z" fill="#dcdcdc" stroke="#c6c6c6" stroke-width="1.200"/><path d="M7 17.500v-5l4 5z" fill="#efefef" stroke="#c6c6c6" stroke-width="0.800"/><path d="M17.500 3.500h3.500v17.500h-3.500z" fill="#dedede" stroke="#c9c9c9"/><path d="M17.500 7h1.500M17.500 10h1.500M17.500 13h1.500M17.500 16h1.500" stroke="#c0c0c0"/></svg>
<svg class="a" style="left:63.0px;top:104.0px;" width="22.080000000000002" height="22.080000000000002" viewBox="0 0 24 24"><circle cx="4.500" cy="11" r="2" fill="#e3e3e3" stroke="#c9c9c9"/><circle cx="10" cy="5" r="2" fill="#e3e3e3" stroke="#c9c9c9"/><circle cx="17" cy="7" r="2" fill="#e3e3e3" stroke="#c9c9c9"/><rect x="12" y="12.500" width="9" height="9" rx="1" fill="#cdcdcd"/><path d="M13.500 17h3.500v-2.500l3.300 2.500l-3.300 2.500v-2.500" fill="#f2f2f2" stroke="#f2f2f2" stroke-width="0.700"/></svg>
<svg class="a" style="left:90.25px;top:114px;" width="7.5" height="4.5" viewBox="0 0 7.5 4.5"><path d="M0 0h7.5 l-3.75 4z" fill="#6f6f6f"/></svg>
<svg class="a" style="left:102.0px;top:104.0px;" width="22.080000000000002" height="22.080000000000002" viewBox="0 0 24 24"><path d="M3 8c0-4 5-5 8-3.500s5-1.500 8 0s2 6-1 6.500s-4 0-6 1.500s-4 2-6 0s-3-2.500-3-4.500z" fill="#dadada" stroke="#cbcbcb" stroke-width="1"/><rect x="12.500" y="12.500" width="9" height="9" rx="1.500" fill="#cdcdcd"/><path d="M14.500 17a2.700 2.700 0 1 1 2.700 2.700" fill="none" stroke="#f0f0f0" stroke-width="1.300"/></svg>
<svg class="a" style="left:128.0px;top:104.0px;" width="22.080000000000002" height="22.080000000000002" viewBox="0 0 24 24"><circle cx="9" cy="9" r="6" fill="#dcdcdc" stroke="#cbcbcb"/><path d="M14 8l6 3.500v6.500l-6 3.500l-6-3.500v-6.500z" fill="#e0e0e0" stroke="#c9c9c9" stroke-width="1"/><path d="M9 9l5 5" stroke="#c4c4c4"/></svg>
<svg class="a" style="left:154.0px;top:104.0px;" width="22.080000000000002" height="22.080000000000002" viewBox="0 0 24 24"><path d="M3 8c0-4 5-5 8-3.500s5-1.500 8 0s2 6-1 6.500s-4 0-6 1.500s-4 2-6 0s-3-2.500-3-4.500z" fill="#dadada" stroke="#cbcbcb" stroke-width="1"/><ellipse cx="8.500" cy="8" rx="3" ry="2" fill="#f0f0f0" stroke="#cbcbcb" stroke-width="0.800"/><rect x="13" y="13" width="8" height="8" rx="1.200" fill="#cfcfcf" stroke="#c0c0c0" stroke-width="0.800"/><path d="M17 14.5v5M14.5 17h5M15 15l4 4M19 15l-4 4" stroke="#f3f3f3" stroke-width="1.300"/></svg>
<svg class="a" style="left:179.5px;top:104.0px;" width="22.080000000000002" height="22.080000000000002" viewBox="0 0 24 24"><path d="M3 8c0-4 5-5 8-3.500s5-1.500 8 0s2 6-1 6.500s-4 0-6 1.500s-4 2-6 0s-3-2.500-3-4.500z" fill="#dadada" stroke="#cbcbcb" stroke-width="1"/><path d="M3 18c0-3 4-5 6-3s0 6-3 6s-3-1.500-3-3z" fill="#dadada" stroke="#cbcbcb"/><rect x="13" y="13" width="8" height="8" rx="1.200" fill="#cfcfcf" stroke="#c0c0c0" stroke-width="0.800"/><path d="M17 14.5v5M14.5 17h5M15 15l4 4M19 15l-4 4" stroke="#f3f3f3" stroke-width="1.300"/></svg>
<svg class="a" style="left:205.0px;top:104.0px;" width="22.080000000000002" height="22.080000000000002" viewBox="0 0 24 24"><path d="M3 8c0-4 5-5 8-3.500s5-1.500 8 0s2 6-1 6.500s-4 0-6 1.500s-4 2-6 0s-3-2.500-3-4.500z" fill="#dadada" stroke="#cbcbcb" stroke-width="1"/><ellipse cx="8.500" cy="8" rx="3" ry="2" fill="#cfcfcf"/><rect x="13" y="13" width="8" height="8" rx="1.200" fill="#cfcfcf" stroke="#c0c0c0" stroke-width="0.800"/><path d="M17 14.5v5M14.5 17h5M15 15l4 4M19 15l-4 4" stroke="#f3f3f3" stroke-width="1.300"/></svg>
<svg class="a" style="left:231.0px;top:104.0px;" width="22.080000000000002" height="22.080000000000002" viewBox="0 0 24 24"><path d="M3 8c0-4 5-5 8-3.500s5-1.500 8 0s2 6-1 6.500s-4 0-6 1.500s-4 2-6 0s-3-2.500-3-4.500z" fill="#dadada" stroke="#cbcbcb" stroke-width="1"/><ellipse cx="8.500" cy="8" rx="3" ry="2" fill="#f0f0f0" stroke="#cbcbcb" stroke-width="0.800"/><rect x="13" y="13" width="8" height="8" rx="1.200" fill="#d4d4d4"/><path d="M15 15l4 4M19 15l-4 4" stroke="#f4f4f4" stroke-width="1.600"/></svg>
<svg class="a" style="left:257.0px;top:104.0px;" width="22.080000000000002" height="22.080000000000002" viewBox="0 0 24 24"><path d="M3 8c0-4 5-5 8-3.500s5-1.500 8 0s2 6-1 6.500s-4 0-6 1.500s-4 2-6 0s-3-2.500-3-4.500z" fill="#dadada" stroke="#cbcbcb" stroke-width="1"/><path d="M3 18c0-3 4-5 6-3s0 6-3 6s-3-1.500-3-3z" fill="#dadada" stroke="#cbcbcb"/><rect x="13" y="13" width="8" height="8" rx="1.200" fill="#d4d4d4"/><path d="M15 15l4 4M19 15l-4 4" stroke="#f4f4f4" stroke-width="1.600"/></svg>
<svg class="a" style="left:282.5px;top:104.0px;" width="22.080000000000002" height="22.080000000000002" viewBox="0 0 24 24"><path d="M4 6c2-3 6-3 9-2s7-1 8 2s-2 5-5 5s-3 2-4 5s-2 5-5 4s-3-4-2-7s-3-4-1-7z" fill="#dadada" stroke="#cbcbcb" stroke-width="1"/></svg>
<svg class="a" style="left:308.5px;top:104.0px;" width="22.080000000000002" height="22.080000000000002" viewBox="0 0 24 24"><path d="M4 17c-2-3 1-6 4-7s5-5 8-6s6 1 5 4s-4 5-6 7s-3 5-6 5s-4-1-5-3z" fill="#d6d6d6" stroke="#c6c6c6" stroke-width="1"/><path d="M7 16c-1-2 1-3.500 3-4.500s4-4 6-4.500" fill="none" stroke="#c9c9c9"/></svg>
<svg class="a" style="left:334.0px;top:104.0px;" width="22.080000000000002" height="22.080000000000002" viewBox="0 0 24 24"><path d="M4 4l5 13l6-13h6" fill="none" stroke="#d0d0d0" stroke-width="1.100"/><circle cx="4" cy="4" r="1.500" fill="#eee" stroke="#cbcbcb"/><circle cx="15" cy="4" r="1.500" fill="#eee" stroke="#cbcbcb"/><circle cx="21" cy="4" r="1.500" fill="#eee" stroke="#cbcbcb"/><rect x="12" y="12.500" width="9" height="9" rx="2" fill="#f0f0f0" stroke="#c6c6c6" stroke-width="1.200"/><path d="M14 17a2.700 2.700 0 0 1 5-1M19 17a2.700 2.700 0 0 1-5 1" fill="none" stroke="#c6c6c6" stroke-width="1.100"/></svg>
<svg class="a" style="left:359.5px;top:104.0px;" width="22.080000000000002" height="22.080000000000002" viewBox="0 0 24 24"><path d="M12 2v20M3 10h18" stroke="#d0d0d0" stroke-width="1.200"/><rect x="15.500" y="3" width="4.500" height="4.500" fill="#eee" stroke="#cbcbcb"/><circle cx="12" cy="10" r="1.600" fill="#eee" stroke="#c9c9c9"/><circle cx="17" cy="10" r="1.600" fill="#eee" stroke="#c9c9c9"/><path d="M17 10v11" stroke="#c9c9c9" stroke-width="1.500"/><path d="M4 16l4 4M8 16l-4 4" stroke="#cfcfcf" stroke-width="1.200"/></svg>
<svg class="a" style="left:385.5px;top:104.0px;" width="22.080000000000002" height="22.080000000000002" viewBox="0 0 24 24"><circle cx="7.500" cy="8" r="5" fill="#dadada" stroke="#cbcbcb"/><circle cx="16.500" cy="8" r="5" fill="#dadada" stroke="#cbcbcb"/><path d="M10 11l-4 9M14 11l4 9" stroke="#cbcbcb" stroke-width="1.200"/><ellipse cx="6.500" cy="20" rx="1.800" ry="2.500" fill="none" stroke="#cbcbcb" stroke-width="1.100" transform="rotate(25 6.500 20)"/><ellipse cx="17.500" cy="20" rx="1.800" ry="2.500" fill="none" stroke="#cbcbcb" stroke-width="1.100" transform="rotate(-25 17.500 20)"/></svg>
<svg class="a" style="left:411.5px;top:104.0px;" width="22.080000000000002" height="22.080000000000002" viewBox="0 0 24 24"><circle cx="7.500" cy="8" r="5" fill="#dadada" stroke="#cbcbcb"/><circle cx="16.500" cy="8" r="5" fill="#dadada" stroke="#cbcbcb"/><path d="M10 11l-4 9M14 11l4 9" stroke="#cbcbcb" stroke-width="1.200"/><ellipse cx="6.500" cy="20" rx="1.800" ry="2.500" fill="none" stroke="#cbcbcb" stroke-width="1.100" transform="rotate(25 6.500 20)"/><ellipse cx="17.500" cy="20" rx="1.800" ry="2.500" fill="none" stroke="#cbcbcb" stroke-width="1.100" transform="rotate(-25 17.500 20)"/></svg>
<svg class="a" style="left:437.5px;top:104.0px;" width="22.080000000000002" height="22.080000000000002" viewBox="0 0 24 24"><circle cx="7.500" cy="8" r="5" fill="#dadada" stroke="#cbcbcb"/><circle cx="16.500" cy="8" r="5" fill="#e6e6e6" stroke="#cbcbcb"/><path d="M10 6h4M10 8h4M10 10h4" stroke="#c6c6c6" stroke-width="0.800"/><path d="M7 12c1 3 4 6 7 8" fill="none" stroke="#cfcfcf" stroke-width="1"/></svg>
<svg class="a" style="left:463.5px;top:104.0px;" width="22.080000000000002" height="22.080000000000002" viewBox="0 0 24 24"><path d="M4 5h16M4 9h16M4 13h16M4 17h16M4 21h16" stroke="#e0e0e0" stroke-width="1.600"/><path d="M12 3v19M7 7c3 0 5 2 5 5M17 7c-3 0-5 2-5 5M7 19c3 0 5-2 5-5M17 19c-3 0-5-2-5-5" fill="none" stroke="#cdcdcd" stroke-width="1"/></svg>
<svg class="a" style="left:489.0px;top:104.0px;" width="22.080000000000002" height="22.080000000000002" viewBox="0 0 24 24"><path d="M12 5l8 4.500l-8 4.500z" fill="#ececec" stroke="#c9c9c9" stroke-width="1"/><path d="M8 14l-3 6.500h8z" fill="#f0f0f0" stroke="#d6d6d6" stroke-width="1"/><path d="M9 4c-5 3-5 10-2 13" fill="none" stroke="#cdcdcd" stroke-width="1.100"/><path d="M9 4l-3 .5M9 4l-.5 3" stroke="#cdcdcd" stroke-width="1.100"/></svg>
<svg class="a" style="left:515.75px;top:114px;" width="7.5" height="4.5" viewBox="0 0 7.5 4.5"><path d="M0 0h7.5 l-3.75 4z" fill="#6f6f6f"/></svg>
<div class="a" style="left:527px;top:102px;width:1px;height:25px;background:#d2d2d2;"></div>
<div class="a" style="left:528px;top:102px;width:1px;height:25px;background:#fbfbfb;"></div>
<svg class="a" style="left:531px;top:105px;" width="3" height="19" viewBox="0 0 3 19"><rect x="0.6" y="0" width="1.300" height="1.300" fill="#b0b0b0"/><rect x="1.4" y="3" width="1.300" height="1.300" fill="#b0b0b0"/><rect x="0.6" y="6" width="1.300" height="1.300" fill="#b0b0b0"/><rect x="1.4" y="9" width="1.300" height="1.300" fill="#b0b0b0"/><rect x="0.6" y="12" width="1.300" height="1.300" fill="#b0b0b0"/><rect x="1.4" y="15" width="1.300" height="1.300" fill="#b0b0b0"/></svg>
<div class="a" style="left:537.5px;top:103px;width:26px;height:24px;background:#cce4f7;border:1px solid #99c9ef;"></div>
<svg class="a" style="left:539.5px;top:104.0px;" width="22.080000000000002" height="22.080000000000002" viewBox="0 0 24 24"><g transform="rotate(-42 12 12)"><path d="M5 3.500h5v8.500a2 2 0 0 0 4 0v-8.500h5v8.500a7 7 0 0 1-14 0z" fill="#d41a1a" stroke="#6a0a0a" stroke-width="1" stroke-linejoin="round"/><rect x="5" y="3.500" width="5" height="3.500" fill="#fff" stroke="#6a0a0a" stroke-width="0.900"/><rect x="14" y="3.500" width="5" height="3.500" fill="#fff" stroke="#6a0a0a" stroke-width="0.900"/></g></svg>
<svg class="a" style="left:566.0px;top:104.0px;" width="22.080000000000002" height="22.080000000000002" viewBox="0 0 24 24"><path d="M4 3l6 16l5-12M10 19l6-8M10 19l7-3" fill="none" stroke="#78b06a" stroke-width="1.200"/><circle cx="4" cy="3" r="1.600" fill="#8cc07e" stroke="#4e8a44" stroke-width="0.700"/><circle cx="10" cy="19" r="1.600" fill="#8cc07e" stroke="#4e8a44" stroke-width="0.700"/><circle cx="15" cy="7" r="1.300" fill="#fff" stroke="#555" stroke-width="0.800"/><circle cx="19" cy="7" r="1.300" fill="#fff" stroke="#555" stroke-width="0.800"/><circle cx="16" cy="11.500" r="1.300" fill="#fff" stroke="#555" stroke-width="0.800"/><circle cx="20" cy="11.500" r="1.300" fill="#fff" stroke="#555" stroke-width="0.800"/><path d="M16.500 19h6l-3 3.500z" fill="#111"/></svg>
<div class="a" style="left:589px;top:103px;width:26px;height:24px;background:#cce4f7;border:1px solid #99c9ef;"></div>
<svg class="a" style="left:591.0px;top:104.0px;" width="22.080000000000002" height="22.080000000000002" viewBox="0 0 24 24"><path d="M4.500 5l6.500 13.500l6.500-13.500" fill="none" stroke="#5fb06a" stroke-width="1.500"/><path d="M16.500 19h6l-3 3.500z" fill="#111"/></svg>
<div class="a" style="left:615px;top:107px;width:71px;height:17px;background:#fff;border:1px solid #b9b9b9;box-shadow:inset 0 1px 1px rgba(0,0,0,0.15);"></div>
<span class="t" id="t26" style="left:617.5px;top:105.5px;font-size:12.5px;color:#000;transform:scaleX(1.0000);transform-origin:0 50%;">20</span>
<svg class="a" style="left:675px;top:108px;" width="10" height="15" viewBox="0 0 10 15"><path d="M1.500 6L5 2L8.500 6zM1.500 9L5 13L8.500 9z" fill="#111"/></svg>
<div class="a" style="left:688px;top:107px;width:60px;height:17px;background:#e1e1e1;border:1px solid #adadad;"></div>
<span class="t" id="t27" style="left:691px;top:105.5px;font-size:12.5px;color:#000;transform:scaleX(0.9231);transform-origin:0 50%;">px</span>
<svg class="a" style="left:3px;top:132px;" width="3" height="34" viewBox="0 0 3 34"><rect x="0.6" y="0" width="1.300" height="1.300" fill="#b0b0b0"/><rect x="1.4" y="3" width="1.300" height="1.300" fill="#b0b0b0"/><rect x="0.6" y="6" width="1.300" height="1.300" fill="#b0b0b0"/><rect x="1.4" y="9" width="1.300" height="1.300" fill="#b0b0b0"/><rect x="0.6" y="12" width="1.300" height="1.300" fill="#b0b0b0"/><rect x="1.4" y="15" width="1.300" height="1.300" fill="#b0b0b0"/><rect x="0.6" y="18" width="1.300" height="1.300" fill="#b0b0b0"/><rect x="1.4" y="21" width="1.300" height="1.300" fill="#b0b0b0"/><rect x="0.6" y="24" width="1.300" height="1.300" fill="#b0b0b0"/><rect x="1.4" y="27" width="1.300" height="1.300" fill="#b0b0b0"/><rect x="0.6" y="30" width="1.300" height="1.300" fill="#b0b0b0"/></svg>
<svg class="a" style="left:11.5px;top:138.5px;" width="23.04" height="23.04" viewBox="0 0 24 24"><rect x="2.500" y="3.500" width="16" height="14" fill="#ececec" stroke="#333" stroke-width="1" stroke-dasharray="1.500 1.200"/><rect x="3" y="4" width="10" height="9.500" fill="#f5e04e" stroke="#c9a52a" stroke-width="0.600"/><g transform="translate(11 9.500)"><path d="M0 0v11l2.600-2.500l2 4.300l1.800-.8l-2-4.300h3.600z" fill="#fff" stroke="#555" stroke-width="0.900" stroke-linejoin="round"/></g></svg>
<svg class="a" style="left:38.0px;top:148px;" width="8" height="4.5" viewBox="0 0 8 4.5"><path d="M0 0h8 l-4 4z" fill="#111"/></svg>
<svg class="a" style="left:50.0px;top:138.5px;" width="23.04" height="23.04" viewBox="0 0 24 24"><rect x="8" y="9.500" width="12" height="10.500" fill="#f5e04e" stroke="#c9a52a" stroke-width="0.900"/><rect x="3.500" y="3.500" width="12" height="11" rx="1" fill="#dcdcdc" stroke="#8f8f8f" stroke-width="1"/><rect x="5.500" y="5.500" width="8" height="2.800" fill="#fafafa" stroke="#9a9a9a" stroke-width="0.600"/><rect x="5.500" y="9.700" width="8" height="2.800" fill="#fafafa" stroke="#9a9a9a" stroke-width="0.600"/></svg>
<svg class="a" style="left:76.5px;top:148px;" width="8" height="4.5" viewBox="0 0 8 4.5"><path d="M0 0h8 l-4 4z" fill="#111"/></svg>
<svg class="a" style="left:89.0px;top:138.5px;" width="23.04" height="23.04" viewBox="0 0 24 24"><rect x="3" y="3" width="11" height="11" fill="#f5e04e" stroke="#c9a52a" stroke-width="0.900"/><rect x="7" y="7.500" width="11" height="11" fill="#f5e04e" stroke="#c9a52a" stroke-width="0.900"/><rect x="13" y="13.500" width="9" height="9" rx="2" fill="#d9302c" stroke="#9a1a18" stroke-width="0.700"/><circle cx="17.500" cy="18" r="2.700" fill="none" stroke="#fff" stroke-width="1.300"/><path d="M15.600 19.900l3.800-3.800" stroke="#fff" stroke-width="1.300"/></svg>
<svg class="a" style="left:114.5px;top:148px;" width="8" height="4.5" viewBox="0 0 8 4.5"><path d="M0 0h8 l-4 4z" fill="#111"/></svg>
<svg class="a" style="left:127.0px;top:138.5px;" width="23.04" height="23.04" viewBox="0 0 24 24"><rect x="3" y="3" width="12.500" height="12.500" fill="#f5e04e" stroke="#c9a52a" stroke-width="0.900"/><path d="M18.500 22c-2-3-3-4.500-3-6a3 3 0 0 1 6 0c0 1.500-1 3-3 6z" fill="#7fa6cf" stroke="#5b87b8" stroke-width="0.800"/><circle cx="18.500" cy="16" r="1.100" fill="#fff"/></svg>
<div class="a" style="left:151.5px;top:130px;width:1px;height:39px;background:#d2d2d2;"></div>
<div class="a" style="left:152.5px;top:130px;width:1px;height:39px;background:#fbfbfb;"></div>
<svg class="a" style="left:156px;top:132px;" width="3" height="34" viewBox="0 0 3 34"><rect x="0.6" y="0" width="1.300" height="1.300" fill="#b0b0b0"/><rect x="1.4" y="3" width="1.300" height="1.300" fill="#b0b0b0"/><rect x="0.6" y="6" width="1.300" height="1.300" fill="#b0b0b0"/><rect x="1.4" y="9" width="1.300" height="1.300" fill="#b0b0b0"/><rect x="0.6" y="12" width="1.300" height="1.300" fill="#b0b0b0"/><rect x="1.4" y="15" width="1.300" height="1.300" fill="#b0b0b0"/><rect x="0.6" y="18" width="1.300" height="1.300" fill="#b0b0b0"/><rect x="1.4" y="21" width="1.300" height="1.300" fill="#b0b0b0"/><rect x="0.6" y="24" width="1.300" height="1.300" fill="#b0b0b0"/><rect x="1.4" y="27" width="1.300" height="1.300" fill="#b0b0b0"/><rect x="0.6" y="30" width="1.300" height="1.300" fill="#b0b0b0"/></svg>
<svg class="a" style="left:163.5px;top:138.5px;" width="23.04" height="23.04" viewBox="0 0 24 24"><path d="M12 9V3.500M9.500 6l2.500-3l2.500 3" fill="none" stroke="#111" stroke-width="1.600"/><path d="M6.500 13h2.500l1-2h4l1 2h2.500v8.500h-11z" fill="#111"/><circle cx="12" cy="17" r="2.600" fill="none" stroke="#fff" stroke-width="1"/><circle cx="12" cy="17" r="0.900" fill="#fff"/></svg>
<svg class="a" style="left:189.0px;top:137.5px;" width="23.04" height="23.04" viewBox="0 0 24 24"><rect x="3" y="3" width="15" height="12" fill="#fff" stroke="#111" stroke-width="2" stroke-dasharray="2.500 1.500"/><path d="M6 12h2l1-1.500h3l1 1.500h2v-6h-9z" fill="#333"/><g transform="translate(13.500 10) scale(0.950)"><path d="M0 0v11l2.600-2.500l2 4.300l1.800-.8l-2-4.300h3.600z" fill="#fff" stroke="#111" stroke-width="1.100" stroke-linejoin="round"/></g></svg>
<div class="a" style="left:214.5px;top:130px;width:1px;height:39px;background:#d2d2d2;"></div>
<div class="a" style="left:215.5px;top:130px;width:1px;height:39px;background:#fbfbfb;"></div>
<svg class="a" style="left:219px;top:132px;" width="3" height="34" viewBox="0 0 3 34"><rect x="0.6" y="0" width="1.300" height="1.300" fill="#b0b0b0"/><rect x="1.4" y="3" width="1.300" height="1.300" fill="#b0b0b0"/><rect x="0.6" y="6" width="1.300" height="1.300" fill="#b0b0b0"/><rect x="1.4" y="9" width="1.300" height="1.300" fill="#b0b0b0"/><rect x="0.6" y="12" width="1.300" height="1.300" fill="#b0b0b0"/><rect x="1.4" y="15" width="1.300" height="1.300" fill="#b0b0b0"/><rect x="0.6" y="18" width="1.300" height="1.300" fill="#b0b0b0"/><rect x="1.4" y="21" width="1.300" height="1.300" fill="#b0b0b0"/><rect x="0.6" y="24" width="1.300" height="1.300" fill="#b0b0b0"/><rect x="1.4" y="27" width="1.300" height="1.300" fill="#b0b0b0"/><rect x="0.6" y="30" width="1.300" height="1.300" fill="#b0b0b0"/></svg>
<svg class="a" style="left:227.0px;top:139.0px;" width="22.080000000000002" height="22.080000000000002" viewBox="0 0 24 24"><rect x="2" y="2" width="20" height="20" fill="#6cb44e"/><path d="M2 2h20L2 22z" fill="#7cc35c"/><rect x="2" y="2" width="20" height="20" fill="none" stroke="#5a9c40" stroke-width="0.800"/><circle cx="13.500" cy="10.500" r="5.300" fill="none" stroke="#eaf7e2" stroke-width="2"/><path d="M9.500 14.500L4.500 19.500" stroke="#eaf7e2" stroke-width="2.400" stroke-linecap="round"/></svg>
<svg class="a" style="left:253.0px;top:139.0px;" width="22.080000000000002" height="22.080000000000002" viewBox="0 0 24 24"><rect x="2.500" y="2.500" width="18" height="19" fill="#f4e3a0"/><path d="M2.500 2.500h6v7h-6z" fill="#8bc46a"/><path d="M2.500 12h5v5h-5z" fill="#c94f8a"/><path d="M9 3v9l4 4" fill="none" stroke="#f2c230" stroke-width="2.200"/><path d="M13 14c2 0 4 2 4 7.500h-7" fill="#6a95c6"/><path d="M6 19l5 2" stroke="#e0b52c" stroke-width="2"/><path d="M9.500 6.500h4v4" fill="none" stroke="#4a7a3a" stroke-width="1.200"/><path d="M12 15.500L21 3" stroke="#7a3a12" stroke-width="2.600" stroke-linecap="round"/><path d="M12 15.500l-1.500 3l3-1.500z" fill="#f2c230"/></svg>
<div class="a" style="left:277.5px;top:130px;width:1px;height:39px;background:#d2d2d2;"></div>
<div class="a" style="left:278.5px;top:130px;width:1px;height:39px;background:#fbfbfb;"></div>
<svg class="a" style="left:282.5px;top:132px;" width="3" height="34" viewBox="0 0 3 34"><rect x="0.6" y="0" width="1.300" height="1.300" fill="#b0b0b0"/><rect x="1.4" y="3" width="1.300" height="1.300" fill="#b0b0b0"/><rect x="0.6" y="6" width="1.300" height="1.300" fill="#b0b0b0"/><rect x="1.4" y="9" width="1.300" height="1.300" fill="#b0b0b0"/><rect x="0.6" y="12" width="1.300" height="1.300" fill="#b0b0b0"/><rect x="1.4" y="15" width="1.300" height="1.300" fill="#b0b0b0"/><rect x="0.6" y="18" width="1.300" height="1.300" fill="#b0b0b0"/><rect x="1.4" y="21" width="1.300" height="1.300" fill="#b0b0b0"/><rect x="0.6" y="24" width="1.300" height="1.300" fill="#b0b0b0"/><rect x="1.4" y="27" width="1.300" height="1.300" fill="#b0b0b0"/><rect x="0.6" y="30" width="1.300" height="1.300" fill="#b0b0b0"/></svg>
<svg class="a" style="left:290.5px;top:139.0px;" width="22.080000000000002" height="22.080000000000002" viewBox="0 0 24 24"><rect x="2" y="2" width="20" height="20" fill="#e6e6e6"/><path d="M2 2h10v10h-10zM12 12h10v10h-10z" fill="#dcdcdc"/><path d="M6 19l8-8l2.500 2.500l-8 8l-3.500 1z" fill="#ececec" stroke="#b9b9b9" stroke-width="0.900"/><path d="M13 9l5 5" stroke="#8a8a8a" stroke-width="2.200"/><path d="M15 10.500l4-4.500a2.200 2.200 0 0 1 3 3l-4.500 4z" fill="#9a9a9a"/></svg>
<svg class="a" style="left:314.0px;top:139.0px;" width="22.080000000000002" height="22.080000000000002" viewBox="0 0 24 24"><rect x="5" y="4" width="14" height="16" rx="3" fill="#dadada"/></svg>
<svg class="a" style="left:337.75px;top:148px;" width="7.5" height="4.5" viewBox="0 0 7.5 4.5"><path d="M0 0h7.5 l-3.75 4z" fill="#555"/></svg>
<span class="t" id="t28" style="left:347.5px;top:140.5px;font-size:12.5px;color:#000;transform:scaleX(0.8182);transform-origin:0 50%;">Band:</span>
<div class="a" style="left:376px;top:141px;width:30px;height:18px;background:#cccccc;border:1px solid #bfbfbf;"></div>
<span class="t" id="t29" style="left:380px;top:140px;font-size:12px;color:#a0a0a0;">1</span>
<svg class="a" style="left:393px;top:147px;" width="9" height="6" viewBox="0 0 9 6"><path d="M1 1L4.500 4.500L8 1" fill="none" stroke="#b0b0b0" stroke-width="1"/></svg>
<div class="a" style="left:416px;top:141px;width:42px;height:19px;background:#f0f0f0;border:1px solid #d0d0d0;"></div>
<span class="t" id="t30" style="left:419px;top:140.5px;font-size:12px;color:#8a8a8a;transform:scaleX(0.8649);transform-origin:0 50%;">0,0000</span>
<svg class="a" style="left:466.7px;top:138.2px;" width="23.52" height="23.52" viewBox="0 0 24 24"><rect x="2" y="2" width="20" height="20" fill="#e6e6e6"/><path d="M2 2h10v10h-10zM12 12h10v10h-10z" fill="#dcdcdc"/><path d="M5 18l11-12.500l2.500 2.200l-11 12.500l-3.500 1.300z" fill="#e2e0d0" stroke="#c9c7b8" stroke-width="0.800"/></svg>
<svg class="a" style="left:492.7px;top:138.2px;" width="23.52" height="23.52" viewBox="0 0 24 24"><rect x="2" y="2" width="20" height="20" fill="#e6e6e6"/><path d="M2 2h10v10h-10zM12 12h10v10h-10z" fill="#dcdcdc"/><path d="M8 7l9-2.500l3 8l-8.500 4.500z" fill="#dfe3e6" stroke="#b9b9b9" stroke-width="0.900"/><path d="M8 7l3.500 10l-5 3.500l-3-4z" fill="#c6c6c6"/><ellipse cx="9.500" cy="12" rx="2" ry="5" fill="none" stroke="#b5b5b5" transform="rotate(-18 9.500 12)"/></svg>
<svg class="a" style="left:518.7px;top:138.2px;" width="23.52" height="23.52" viewBox="0 0 24 24"><rect x="2" y="2" width="20" height="20" fill="#e6e6e6"/><path d="M2 2h10v10h-10zM12 12h10v10h-10z" fill="#dcdcdc"/><path d="M8 13l9-8.500l3.500 3.500l-9 8.500z" fill="#d4d4d4" stroke="#b9b9b9" stroke-width="0.900"/><path d="M8 13l3.500 3.500l-5 3.500l-3-.5z" fill="#f4f4f4" stroke="#c9c9c9" stroke-width="0.800"/></svg>
<svg class="a" style="left:544.7px;top:138.2px;" width="23.52" height="23.52" viewBox="0 0 24 24"><rect x="2" y="2" width="20" height="20" fill="#e6e6e6"/><path d="M2 2h10v10h-10zM12 12h10v10h-10z" fill="#dcdcdc"/><text x="6.500" y="18" font-size="17" font-family="Liberation Serif,serif" fill="#b9b9b9">ε</text></svg>
<svg class="a" style="left:570.7px;top:138.2px;" width="23.52" height="23.52" viewBox="0 0 24 24"><rect x="2" y="2" width="20" height="20" fill="#e6e6e6"/><path d="M2 2h10v10h-10zM12 12h10v10h-10z" fill="#dcdcdc"/><path d="M3 13c3-12 6-12 8 0s5 10 7 0l3-2" fill="none" stroke="#b3b3c6" stroke-width="1.400"/><path d="M3 15h18" stroke="#cfcfcf" stroke-width="0.800"/></svg>
<svg class="a" style="left:596.2px;top:138.2px;" width="23.52" height="23.52" viewBox="0 0 24 24"><rect x="2" y="2" width="20" height="20" fill="#e6e6e6"/><path d="M2 2h10v10h-10zM12 12h10v10h-10z" fill="#dcdcdc"/><path d="M4 10.500l6.500-6v3.800c5.500 0 8.500 2.800 8.500 6.500c0 2.800-1.800 4.500-4.500 5.500c1.800-1.800 2.200-5.500-4-5.500v3.700z" fill="#c9c9c9" stroke="#bdbdbd" stroke-width="0.700"/></svg>
<svg class="a" style="left:622.2px;top:138.2px;" width="23.52" height="23.52" viewBox="0 0 24 24"><rect x="2" y="2" width="20" height="20" fill="#e6e6e6"/><path d="M2 2h10v10h-10zM12 12h10v10h-10z" fill="#dcdcdc"/><path d="M20 10.500l-6.500-6v3.800c-5.500 0-8.500 2.800-8.500 6.500c0 2.800 1.800 4.500 4.500 5.500c-1.800-1.800-2.200-5.500 4-5.500v3.700z" fill="#d0d0d0" stroke="#c3c3c3" stroke-width="0.700"/></svg>
<svg class="a" style="left:648.2px;top:138.2px;" width="23.52" height="23.52" viewBox="0 0 24 24"><rect x="2" y="2" width="20" height="20" fill="#e6e6e6"/><path d="M2 2h10v10h-10zM12 12h10v10h-10z" fill="#dcdcdc"/><path d="M5 17.500l11-11.500l3 3l-11 11.500z" fill="#cfcfcf" stroke="#bdbdbd" stroke-width="0.800"/><path d="M5.500 6.500l12.500 11.500l-2 2l-12.500-11.500z" fill="#d6d6d6" stroke="#c3c3c3" stroke-width="0.800"/></svg>
<svg class="a" style="left:674.2px;top:138.2px;" width="23.52" height="23.52" viewBox="0 0 24 24"><rect x="2" y="2" width="20" height="20" fill="#a9a9a9"/><path d="M2 2h10v10h-10zM12 12h10v10h-10z" fill="#9c9c9c"/><path d="M4 21l4-12l4 5l3-3l4 10z" fill="#6d6d6d"/><path d="M6 19l9-9.500l2 2l-9 9.500z" fill="#e8cf5a" stroke="#6a5a1a" stroke-width="0.800"/><path d="M13.500 7a3.300 3.300 0 0 1 4.500-3l-2 2l.5 2l2 .5l2-2a3.300 3.300 0 0 1-4.500 4.200z" fill="#f0f0f0" stroke="#555" stroke-width="0.800"/></svg>
<svg class="a" style="left:700.2px;top:138.2px;" width="23.52" height="23.52" viewBox="0 0 24 24"><rect x="3" y="2.500" width="18" height="19" rx="1" fill="#3e6f9e" stroke="#2a4f75" stroke-width="0.800"/><rect x="3" y="2.500" width="5.500" height="19" fill="#3aa652" stroke="#2a7a3c" stroke-width="0.800"/><path d="M5.500 3v18" stroke="#2a7a3c" stroke-width="1"/><text x="10.500" y="17" font-size="14" font-weight="bold" font-family="Liberation Sans,sans-serif" fill="#fff">?</text></svg>
<div class="a" style="left:726.5px;top:130px;width:1px;height:39px;background:#d2d2d2;"></div>
<div class="a" style="left:727.5px;top:130px;width:1px;height:39px;background:#fbfbfb;"></div>
<svg class="a" style="left:731px;top:132px;" width="3" height="34" viewBox="0 0 3 34"><rect x="0.6" y="0" width="1.300" height="1.300" fill="#b0b0b0"/><rect x="1.4" y="3" width="1.300" height="1.300" fill="#b0b0b0"/><rect x="0.6" y="6" width="1.300" height="1.300" fill="#b0b0b0"/><rect x="1.4" y="9" width="1.300" height="1.300" fill="#b0b0b0"/><rect x="0.6" y="12" width="1.300" height="1.300" fill="#b0b0b0"/><rect x="1.4" y="15" width="1.300" height="1.300" fill="#b0b0b0"/><rect x="0.6" y="18" width="1.300" height="1.300" fill="#b0b0b0"/><rect x="1.4" y="21" width="1.300" height="1.300" fill="#b0b0b0"/><rect x="0.6" y="24" width="1.300" height="1.300" fill="#b0b0b0"/><rect x="1.4" y="27" width="1.300" height="1.300" fill="#b0b0b0"/><rect x="0.6" y="30" width="1.300" height="1.300" fill="#b0b0b0"/></svg>
<div class="a" style="left:0px;top:172px;width:42px;height:658px;background:#f0f0f0;"></div>
<div class="a" style="left:3.0px;top:174px;width:1.5px;height:1.5px;background:#bdbdbd;"></div>
<div class="a" style="left:6.5px;top:174px;width:1.5px;height:1.5px;background:#bdbdbd;"></div>
<div class="a" style="left:10.0px;top:174px;width:1.5px;height:1.5px;background:#bdbdbd;"></div>
<div class="a" style="left:13.5px;top:174px;width:1.5px;height:1.5px;background:#bdbdbd;"></div>
<div class="a" style="left:17.0px;top:174px;width:1.5px;height:1.5px;background:#bdbdbd;"></div>
<div class="a" style="left:20.5px;top:174px;width:1.5px;height:1.5px;background:#bdbdbd;"></div>
<div class="a" style="left:24.0px;top:174px;width:1.5px;height:1.5px;background:#bdbdbd;"></div>
<div class="a" style="left:27.5px;top:174px;width:1.5px;height:1.5px;background:#bdbdbd;"></div>
<div class="a" style="left:31.0px;top:174px;width:1.5px;height:1.5px;background:#bdbdbd;"></div>
<div class="a" style="left:34.5px;top:174px;width:1.5px;height:1.5px;background:#bdbdbd;"></div>
<div class="a" style="left:42px;top:174px;width:244px;height:23px;background:#d9d9d9;"></div>
<span class="t" id="t31" style="left:46.5px;top:176px;font-size:13.5px;color:#000;transform:scaleX(0.9118);transform-origin:0 50%;">Layer</span>
<svg class="a" style="left:247px;top:177px;" width="13" height="14" viewBox="0 0 13 14"><path d="M4 4V1.500h8v7.500H9.500" fill="none" stroke="#111" stroke-width="1.800"/><rect x="1" y="5" width="8" height="8" fill="none" stroke="#111" stroke-width="1.800"/></svg>
<svg class="a" style="left:268px;top:180px;" width="12" height="11" viewBox="0 0 12 11"><path d="M1 0.500L11 10.500M11 0.500L1 10.500" stroke="#111" stroke-width="2.300"/></svg>
<div class="a" style="left:42px;top:221px;width:245px;height:608px;background:#fff;border:1px solid #828790;"></div>
<div class="a" style="left:64px;top:222px;width:222px;height:19px;background:#d9d9d9;"></div>
<div class="a" style="left:43px;top:222px;width:243px;height:590px;overflow:hidden"><div class="a" style="left:-43px;top:-222px;width:400px;height:900px">
<div class="a" style="left:66.0px;top:225px;width:13px;height:13px;background:#fff;border:1px solid #333;"></div>
<svg class="a" style="left:66.0px;top:225px;" width="13" height="13" viewBox="0 0 13 13"><path d="M2.500 6.500L5.300 9.300L10.500 3.500" fill="none" stroke="#222" stroke-width="1.200"/></svg>
<svg class="a" style="left:86.0px;top:226px;" width="12" height="12" viewBox="0 0 12 12"><circle cx="6" cy="6" r="4" fill="#9bb973" stroke="#5e7a3b" stroke-width="1"/></svg>
<span class="t" id="t32" style="left:106.0px;top:222px;font-size:12.5px;color:#000;font-weight:bold;transform:scaleX(1.0569);transform-origin:0 50%;text-decoration:underline;">Funde WT 2017 2019</span>
<svg class="a" style="left:47px;top:248px;" width="10" height="8" viewBox="0 0 10 8"><path d="M1 1.500L5 5.500L9 1.500" fill="none" stroke="#222" stroke-width="1.300"/></svg>
<div class="a" style="left:66.0px;top:245px;width:13px;height:13px;background:#fff;border:1px solid #333;"></div>
<svg class="a" style="left:66.0px;top:245px;" width="13" height="13" viewBox="0 0 13 13"><path d="M2.500 6.500L5.300 9.300L10.500 3.500" fill="none" stroke="#222" stroke-width="1.200"/></svg>
<svg class="a" style="left:84.0px;top:243px;" width="17" height="18" viewBox="0 0 17 18"><path d="M1 7.500v9h9" fill="none" stroke="#a9a9a9" stroke-width="1"/><path d="M3.500 5.500h10.500v9h-10.500z" fill="#f4f4f4" stroke="#858585" stroke-width="1"/><path d="M6.500 10.500V4a2.200 2.200 0 0 1 4.400 0v7a1.100 1.100 0 0 1-2.200 0V5.500" fill="none" stroke="#5f5f5f" stroke-width="1.050"/></svg>
<span class="t" id="t33" style="left:106.0px;top:242px;font-size:12.5px;color:#000;transform:scaleX(0.9024);transform-origin:0 50%;">Strasse_Wege</span>
<div class="a" style="left:86.5px;top:265px;width:13px;height:13px;background:#fff;border:1px solid #333;"></div>
<svg class="a" style="left:86.5px;top:265px;" width="13" height="13" viewBox="0 0 13 13"><path d="M2.500 6.500L5.300 9.300L10.500 3.500" fill="none" stroke="#222" stroke-width="1.200"/></svg>
<svg class="a" style="left:105px;top:264px;" width="16" height="16" viewBox="0 0 16 16"><rect x="1" y="1" width="14" height="14" fill="#fff" stroke="#e0262c" stroke-width="1.500"/></svg>
<span class="t" id="t34" style="left:126px;top:262px;font-size:12.5px;color:#000;font-weight:bold;transform:scaleX(0.9530);transform-origin:0 50%;">puffer_3m_strasse_wege</span>
<div class="a" style="left:86.5px;top:285px;width:13px;height:13px;background:#fff;border:1px solid #333;"></div>
<svg class="a" style="left:86.5px;top:285px;" width="13" height="13" viewBox="0 0 13 13"><path d="M2.500 6.500L5.300 9.300L10.500 3.500" fill="none" stroke="#222" stroke-width="1.200"/></svg>
<div class="a" style="left:105px;top:290.5px;width:16px;height:3px;background:#000;"></div>
<span class="t" id="t35" style="left:126px;top:282px;font-size:12.5px;color:#000;font-weight:bold;transform:scaleX(0.9416);transform-origin:0 50%;">strasse_wege_zusammen</span>
<div class="a" style="left:86.5px;top:305px;width:13px;height:13px;background:#fff;border:1px solid #333;"></div>
<div class="a" style="left:105px;top:310.5px;width:16px;height:3px;background:#1f1fd0;"></div>
<span class="t" id="t36" style="left:126px;top:302px;font-size:12.5px;color:#7f7f7f;font-weight:bold;font-style:italic;transform:scaleX(0.9737);transform-origin:0 50%;">Zugangsweg</span>
<svg class="a" style="left:70.0px;top:327px;" width="7" height="10" viewBox="0 0 7 10"><path d="M1.500 1L5.500 5L1.500 9" fill="none" stroke="#8a8a8a" stroke-width="1.200"/></svg>
<div class="a" style="left:86.5px;top:325px;width:13px;height:13px;background:#fff;border:1px solid #333;"></div>
<svg class="a" style="left:104px;top:323px;" width="17" height="18" viewBox="0 0 17 18"><path d="M1 7.500v9h9" fill="none" stroke="#a9a9a9" stroke-width="1"/><path d="M3.500 5.500h10.500v9h-10.500z" fill="#f4f4f4" stroke="#858585" stroke-width="1"/><path d="M6.500 10.500V4a2.200 2.200 0 0 1 4.400 0v7a1.100 1.100 0 0 1-2.200 0V5.500" fill="none" stroke="#5f5f5f" stroke-width="1.050"/></svg>
<span class="t" id="t37" style="left:127px;top:322px;font-size:12.5px;color:#000;transform:scaleX(0.9048);transform-origin:0 50%;">Strasse</span>
<svg class="a" style="left:70.0px;top:347px;" width="7" height="10" viewBox="0 0 7 10"><path d="M1.500 1L5.500 5L1.500 9" fill="none" stroke="#8a8a8a" stroke-width="1.200"/></svg>
<div class="a" style="left:86.5px;top:345px;width:13px;height:13px;background:#fff;border:1px solid #333;"></div>
<svg class="a" style="left:104px;top:343px;" width="17" height="18" viewBox="0 0 17 18"><path d="M1 7.500v9h9" fill="none" stroke="#a9a9a9" stroke-width="1"/><path d="M3.500 5.500h10.500v9h-10.500z" fill="#f4f4f4" stroke="#858585" stroke-width="1"/><path d="M6.500 10.500V4a2.200 2.200 0 0 1 4.400 0v7a1.100 1.100 0 0 1-2.200 0V5.500" fill="none" stroke="#5f5f5f" stroke-width="1.050"/></svg>
<span class="t" id="t38" style="left:127px;top:342px;font-size:12.5px;color:#000;transform:scaleX(0.9623);transform-origin:0 50%;">Rundweg</span>
<svg class="a" style="left:49.5px;top:367px;" width="7" height="10" viewBox="0 0 7 10"><path d="M1.500 1L5.500 5L1.500 9" fill="none" stroke="#8a8a8a" stroke-width="1.200"/></svg>
<div class="a" style="left:66.0px;top:365px;width:13px;height:13px;background:#fff;border:1px solid #333;"></div>
<svg class="a" style="left:84.0px;top:363px;" width="17" height="18" viewBox="0 0 17 18"><path d="M1 7.500v9h9" fill="none" stroke="#a9a9a9" stroke-width="1"/><path d="M3.500 5.500h10.500v9h-10.500z" fill="#f4f4f4" stroke="#858585" stroke-width="1"/><path d="M6.500 10.500V4a2.200 2.200 0 0 1 4.400 0v7a1.100 1.100 0 0 1-2.200 0V5.500" fill="none" stroke="#5f5f5f" stroke-width="1.050"/></svg>
<span class="t" id="t39" style="left:106.0px;top:362px;font-size:12.5px;color:#000;transform:scaleX(0.9113);transform-origin:0 50%;">NSG_1937_und_1983</span>
<svg class="a" style="left:49.5px;top:387px;" width="7" height="10" viewBox="0 0 7 10"><path d="M1.500 1L5.500 5L1.500 9" fill="none" stroke="#8a8a8a" stroke-width="1.200"/></svg>
<div class="a" style="left:66.0px;top:385px;width:13px;height:13px;background:#fff;border:1px solid #333;"></div>
<svg class="a" style="left:84.0px;top:383px;" width="17" height="18" viewBox="0 0 17 18"><path d="M1 7.500v9h9" fill="none" stroke="#a9a9a9" stroke-width="1"/><path d="M3.500 5.500h10.500v9h-10.500z" fill="#f4f4f4" stroke="#858585" stroke-width="1"/><path d="M6.500 10.500V4a2.200 2.200 0 0 1 4.400 0v7a1.100 1.100 0 0 1-2.200 0V5.500" fill="none" stroke="#5f5f5f" stroke-width="1.050"/></svg>
<span class="t" id="t40" style="left:106.0px;top:382px;font-size:12.5px;color:#000;transform:scaleX(0.9690);transform-origin:0 50%;">Pflanzengesellschaften</span>
<svg class="a" style="left:49.5px;top:407px;" width="7" height="10" viewBox="0 0 7 10"><path d="M1.500 1L5.500 5L1.500 9" fill="none" stroke="#8a8a8a" stroke-width="1.200"/></svg>
<div class="a" style="left:66.0px;top:405px;width:13px;height:13px;background:#fff;border:1px solid #333;"></div>
<svg class="a" style="left:84.0px;top:403px;" width="17" height="18" viewBox="0 0 17 18"><path d="M1 7.500v9h9" fill="none" stroke="#a9a9a9" stroke-width="1"/><path d="M3.500 5.500h10.500v9h-10.500z" fill="#f4f4f4" stroke="#858585" stroke-width="1"/><path d="M6.500 10.500V4a2.200 2.200 0 0 1 4.400 0v7a1.100 1.100 0 0 1-2.200 0V5.500" fill="none" stroke="#5f5f5f" stroke-width="1.050"/></svg>
<span class="t" id="t41" style="left:106.0px;top:402px;font-size:12.5px;color:#000;transform:scaleX(1.0476);transform-origin:0 50%;">Biotope</span>
<svg class="a" style="left:49.5px;top:427px;" width="7" height="10" viewBox="0 0 7 10"><path d="M1.500 1L5.500 5L1.500 9" fill="none" stroke="#8a8a8a" stroke-width="1.200"/></svg>
<div class="a" style="left:66.0px;top:425px;width:13px;height:13px;background:#fff;border:1px solid #333;"></div>
<svg class="a" style="left:84.0px;top:423px;" width="17" height="18" viewBox="0 0 17 18"><path d="M1 7.500v9h9" fill="none" stroke="#a9a9a9" stroke-width="1"/><path d="M3.500 5.500h10.500v9h-10.500z" fill="#f4f4f4" stroke="#858585" stroke-width="1"/><path d="M6.500 10.500V4a2.200 2.200 0 0 1 4.400 0v7a1.100 1.100 0 0 1-2.200 0V5.500" fill="none" stroke="#5f5f5f" stroke-width="1.050"/></svg>
<span class="t" id="t42" style="left:106.0px;top:422px;font-size:12.5px;color:#000;transform:scaleX(0.9835);transform-origin:0 50%;">Baumfreie_offene_Moorbereiche</span>
<svg class="a" style="left:49.5px;top:447px;" width="7" height="10" viewBox="0 0 7 10"><path d="M1.500 1L5.500 5L1.500 9" fill="none" stroke="#8a8a8a" stroke-width="1.200"/></svg>
<div class="a" style="left:66.0px;top:445px;width:13px;height:13px;background:#fff;border:1px solid #333;"></div>
<svg class="a" style="left:84.0px;top:443px;" width="17" height="18" viewBox="0 0 17 18"><path d="M1 7.500v9h9" fill="none" stroke="#a9a9a9" stroke-width="1"/><path d="M3.500 5.500h10.500v9h-10.500z" fill="#f4f4f4" stroke="#858585" stroke-width="1"/><path d="M6.500 10.500V4a2.200 2.200 0 0 1 4.400 0v7a1.100 1.100 0 0 1-2.200 0V5.500" fill="none" stroke="#5f5f5f" stroke-width="1.050"/></svg>
<span class="t" id="t43" style="left:106.0px;top:442px;font-size:12.5px;color:#000;transform:scaleX(0.9176);transform-origin:0 50%;">Feuchte_und_nasse_Bereiche</span>
<svg class="a" style="left:49.5px;top:467px;" width="7" height="10" viewBox="0 0 7 10"><path d="M1.500 1L5.500 5L1.500 9" fill="none" stroke="#8a8a8a" stroke-width="1.200"/></svg>
<div class="a" style="left:66.0px;top:465px;width:13px;height:13px;background:#fff;border:1px solid #333;"></div>
<svg class="a" style="left:84.0px;top:466px;" width="17" height="12" viewBox="0 0 17 12"><path d="M1.500 2.500c3-2 5 .5 7.500 0s4-2 6.500-.5v7c-2.500-1.500-4.500 0-7 0s-4-1-7 .5z" fill="#e1e1e1" stroke="#8a8a8a" stroke-width="1" stroke-linejoin="round"/></svg>
<span class="t" id="t44" style="left:106.0px;top:462px;font-size:12.5px;color:#7f7f7f;font-weight:bold;font-style:italic;transform:scaleX(1.0000);transform-origin:0 50%;">Bodenarten</span>
<div class="a" style="left:66.0px;top:485px;width:13px;height:13px;background:#fff;border:1px solid #333;"></div>
<svg class="a" style="left:85.0px;top:485px;" width="14" height="14" viewBox="0 0 14 14"><rect x="0" y="0" width="4.500" height="4.500" fill="#1d3557"/><rect x="4" y="0" width="4.500" height="4.500" fill="#7aa0c8"/><rect x="9" y="0" width="4.500" height="4.500" fill="#1d3557"/><rect x="0" y="4" width="4.500" height="4.500" fill="#a9c4e2"/><rect x="4" y="4" width="4.500" height="4.500" fill="#2c4a75"/><rect x="9" y="4" width="4.500" height="4.500" fill="#dfe9f5"/><rect x="0" y="9" width="4.500" height="4.500" fill="#1d3557"/><rect x="4" y="9" width="4.500" height="4.500" fill="#a9c4e2"/><rect x="9" y="9" width="4.500" height="4.500" fill="#dfe9f5"/></svg>
<span class="t" id="t45" style="left:106.0px;top:482px;font-size:12.5px;color:#7f7f7f;font-weight:bold;font-style:italic;transform:scaleX(0.9783);transform-origin:0 50%;">WT_DGM1_rast</span>
<div class="a" style="left:66.0px;top:505px;width:13px;height:13px;background:#fff;border:1px solid #333;"></div>
<svg class="a" style="left:86.0px;top:506px;" width="12" height="12" viewBox="0 0 12 12"><circle cx="6" cy="6" r="4" fill="#f39c26" stroke="#a56409" stroke-width="1"/></svg>
<span class="t" id="t46" style="left:106.0px;top:502px;font-size:12.5px;color:#7f7f7f;font-weight:bold;font-style:italic;transform:scaleX(0.9596);transform-origin:0 50%;">WT_DGM1_gpkg</span>
<div class="a" style="left:66.0px;top:525px;width:13px;height:13px;background:#fff;border:1px solid #333;"></div>
<svg class="a" style="left:86.0px;top:526px;" width="12" height="12" viewBox="0 0 12 12"><circle cx="6" cy="6" r="4" fill="#b5474b" stroke="#7a2428" stroke-width="1"/></svg>
<span class="t" id="t47" style="left:106.0px;top:522px;font-size:12.5px;color:#7f7f7f;font-weight:bold;font-style:italic;transform:scaleX(0.9556);transform-origin:0 50%;">WT_DGM1_xyz</span>
<svg class="a" style="left:66px;top:544px;" width="15" height="16" viewBox="0 0 15 16"><rect x="0.500" y="0.500" width="14" height="15" rx="1.500" fill="#f2f2f2" stroke="#9a9a9a"/><path d="M3 4h9M3 7h9M3 10h9M3 13h9M5.500 4v9" stroke="#8a8a8a" stroke-width="1"/></svg>
<span class="t" id="t48" style="left:88px;top:542px;font-size:12.5px;color:#000;font-weight:bold;transform:scaleX(0.9774);transform-origin:0 50%;">Funde_WT_2017_2019</span>
<svg class="a" style="left:49.5px;top:567px;" width="7" height="10" viewBox="0 0 7 10"><path d="M1.500 1L5.500 5L1.500 9" fill="none" stroke="#8a8a8a" stroke-width="1.200"/></svg>
<div class="a" style="left:66.0px;top:565px;width:13px;height:13px;background:#fff;border:1px solid #333;"></div>
<svg class="a" style="left:66.0px;top:565px;" width="13" height="13" viewBox="0 0 13 13"><path d="M2.500 6.500L5.300 9.300L10.500 3.500" fill="none" stroke="#222" stroke-width="1.200"/></svg>
<svg class="a" style="left:85.0px;top:565px;" width="14" height="14" viewBox="0 0 14 14"><rect x="0" y="0" width="4.500" height="4.500" fill="#1d3557"/><rect x="4" y="0" width="4.500" height="4.500" fill="#7aa0c8"/><rect x="9" y="0" width="4.500" height="4.500" fill="#1d3557"/><rect x="0" y="4" width="4.500" height="4.500" fill="#a9c4e2"/><rect x="4" y="4" width="4.500" height="4.500" fill="#2c4a75"/><rect x="9" y="4" width="4.500" height="4.500" fill="#dfe9f5"/><rect x="0" y="9" width="4.500" height="4.500" fill="#1d3557"/><rect x="4" y="9" width="4.500" height="4.500" fill="#a9c4e2"/><rect x="9" y="9" width="4.500" height="4.500" fill="#dfe9f5"/></svg>
<span class="t" id="t49" style="left:106.0px;top:562px;font-size:12.5px;color:#000;font-weight:bold;transform:scaleX(0.9800);transform-origin:0 50%;">OpenStreetMap Standard</span>
<svg class="a" style="left:49.5px;top:587px;" width="7" height="10" viewBox="0 0 7 10"><path d="M1.500 1L5.500 5L1.500 9" fill="none" stroke="#8a8a8a" stroke-width="1.200"/></svg>
<div class="a" style="left:66.0px;top:585px;width:13px;height:13px;background:#fff;border:1px solid #333;"></div>
<svg class="a" style="left:85.0px;top:585px;" width="14" height="14" viewBox="0 0 14 14"><rect x="0" y="0" width="4.500" height="4.500" fill="#1d3557"/><rect x="4" y="0" width="4.500" height="4.500" fill="#7aa0c8"/><rect x="9" y="0" width="4.500" height="4.500" fill="#1d3557"/><rect x="0" y="4" width="4.500" height="4.500" fill="#a9c4e2"/><rect x="4" y="4" width="4.500" height="4.500" fill="#2c4a75"/><rect x="9" y="4" width="4.500" height="4.500" fill="#dfe9f5"/><rect x="0" y="9" width="4.500" height="4.500" fill="#1d3557"/><rect x="4" y="9" width="4.500" height="4.500" fill="#a9c4e2"/><rect x="9" y="9" width="4.500" height="4.500" fill="#dfe9f5"/></svg>
<span class="t" id="t50" style="left:106.0px;top:582px;font-size:12.5px;color:#7f7f7f;font-weight:bold;font-style:italic;transform:scaleX(1.0000);transform-origin:0 50%;">WMS LGRB-BW BK50: Bodenkarte</span>
<svg class="a" style="left:49.5px;top:607px;" width="7" height="10" viewBox="0 0 7 10"><path d="M1.500 1L5.500 5L1.500 9" fill="none" stroke="#8a8a8a" stroke-width="1.200"/></svg>
<div class="a" style="left:66.0px;top:605px;width:13px;height:13px;background:#fff;border:1px solid #333;"></div>
<svg class="a" style="left:85.0px;top:605px;" width="14" height="14" viewBox="0 0 14 14"><rect x="0" y="0" width="4.500" height="4.500" fill="#1d3557"/><rect x="4" y="0" width="4.500" height="4.500" fill="#7aa0c8"/><rect x="9" y="0" width="4.500" height="4.500" fill="#1d3557"/><rect x="0" y="4" width="4.500" height="4.500" fill="#a9c4e2"/><rect x="4" y="4" width="4.500" height="4.500" fill="#2c4a75"/><rect x="9" y="4" width="4.500" height="4.500" fill="#dfe9f5"/><rect x="0" y="9" width="4.500" height="4.500" fill="#1d3557"/><rect x="4" y="9" width="4.500" height="4.500" fill="#a9c4e2"/><rect x="9" y="9" width="4.500" height="4.500" fill="#dfe9f5"/></svg>
<span class="t" id="t51" style="left:106.0px;top:602px;font-size:12.5px;color:#7f7f7f;font-weight:bold;font-style:italic;transform:scaleX(0.9792);transform-origin:0 50%;">WMS LGRB-BW GK50: Geologie</span>
</div></div>
<div class="a" style="left:43px;top:812px;width:243px;height:16px;background:#f0f0f0;"></div>
<div class="a" style="left:60px;top:812px;width:118px;height:16px;background:#cdcdcd;"></div>
<svg class="a" style="left:46px;top:815px;" width="8" height="10" viewBox="0 0 8 10"><path d="M6 1L2 5L6 9" fill="none" stroke="#333" stroke-width="1.500"/></svg>
<svg class="a" style="left:271px;top:815px;" width="8" height="10" viewBox="0 0 8 10"><path d="M2 1L6 5L2 9" fill="none" stroke="#333" stroke-width="1.500"/></svg>
<svg class="a" style="left:4.2px;top:181.7px;" width="21.6" height="21.6" viewBox="0 0 24 24"><path d="M3 4l6.500 14l5.500-13h6" fill="none" stroke="#444" stroke-width="1.300"/><circle cx="3.500" cy="4.500" r="1.600" fill="#fff" stroke="#444" stroke-width="1"/><circle cx="9.500" cy="18" r="1.600" fill="#fff" stroke="#444" stroke-width="1"/><circle cx="15" cy="5" r="1.600" fill="#fff" stroke="#444" stroke-width="1"/><circle cx="20.500" cy="4.500" r="1.600" fill="#fff" stroke="#444" stroke-width="1"/><rect x="14" y="13.5" width="8.5" height="8.5" rx="1.300" fill="#6aa55a" stroke="#4c8a3e" stroke-width="0.800"/><path d="M18.25 15v5.5M15.5 17.75h5.5" stroke="#fff" stroke-width="1.700"/></svg>
<svg class="a" style="left:4.2px;top:206.7px;" width="21.6" height="21.6" viewBox="0 0 24 24"><rect x="2" y="2.500" width="16.500" height="16.500" fill="#a9c4e2"/><rect x="2" y="2.500" width="5.500" height="5.500" fill="#1d3557"/><rect x="13" y="2.500" width="5.500" height="5.500" fill="#2c4a75"/><rect x="7.500" y="8" width="5.500" height="5.500" fill="#1d3557"/><rect x="2" y="13.500" width="5.500" height="5.500" fill="#2c4a75"/><rect x="7.500" y="2.500" width="5.500" height="5.500" fill="#6a95c6"/><rect x="2" y="8" width="5.500" height="5.500" fill="#6a95c6"/><rect x="13" y="8" width="5.500" height="5.500" fill="#7aa3d0"/><rect x="14" y="14" width="8.5" height="8.5" rx="1.300" fill="#6aa55a" stroke="#4c8a3e" stroke-width="0.800"/><path d="M18.25 15.5v5.5M15.5 18.25h5.5" stroke="#fff" stroke-width="1.700"/></svg>
<svg class="a" style="left:4.2px;top:232.7px;" width="21.6" height="21.6" viewBox="0 0 24 24"><rect x="2.500" y="3" width="16.500" height="16.500" fill="#a9c4e2" stroke="#2f5688" stroke-width="1.200"/><path d="M2.500 11h16.500M11 3v16.500M2.500 3l8.500 8M11 11l8-8M6.500 11v8.500M2.500 15h8.500" fill="none" stroke="#2f5688" stroke-width="1"/><rect x="11" y="11" width="8" height="8.500" fill="#5b8cc4"/><rect x="14" y="14" width="8.5" height="8.5" rx="1.300" fill="#6aa55a" stroke="#4c8a3e" stroke-width="0.800"/><path d="M18.25 15.5v5.5M15.5 18.25h5.5" stroke="#fff" stroke-width="1.700"/></svg>
<svg class="a" style="left:4.2px;top:258.2px;" width="21.6" height="21.6" viewBox="0 0 24 24"><path d="M6 5.500a4 4 0 1 1 5.500 4c0 4-2.500 7-6 8c2-2 3-4 3-6.500a4 4 0 0 1-2.500-5.500z" fill="#4f7fb8" stroke="#2f5688" stroke-width="0.800"/><rect x="14" y="14" width="8.5" height="8.5" rx="1.300" fill="#6aa55a" stroke="#4c8a3e" stroke-width="0.800"/><path d="M18.25 15.5v5.5M15.5 18.25h5.5" stroke="#fff" stroke-width="1.700"/></svg>
<svg class="a" style="left:4.2px;top:282.7px;" width="21.6" height="21.6" viewBox="0 0 24 24"><path d="M2.500 21c1-7 6-14 16.500-18c-1 6-6 12-13.500 14z" fill="#8fb4dc" stroke="#2f5688" stroke-width="1" stroke-linejoin="round"/><path d="M3 21.500c3-6 8-11 14-16" fill="none" stroke="#2f5688" stroke-width="0.900"/><rect x="14" y="14" width="8.5" height="8.5" rx="1.300" fill="#6aa55a" stroke="#4c8a3e" stroke-width="0.800"/><path d="M18.25 15.5v5.5M15.5 18.25h5.5" stroke="#fff" stroke-width="1.700"/></svg>
<svg class="a" style="left:4.2px;top:307.2px;" width="21.6" height="21.6" viewBox="0 0 24 24"><rect x="2.500" y="2.500" width="16.500" height="17" rx="1.500" fill="#a9c6e6" stroke="#3f6da3" stroke-width="1.200"/><path d="M4.500 4l5.500 11l6-11" fill="none" stroke="#3a3a3a" stroke-width="1.200"/><circle cx="10" cy="15.500" r="1.500" fill="#fff" stroke="#444" stroke-width="0.900"/><circle cx="7" cy="3.500" r="1.200" fill="#fff" stroke="#444" stroke-width="0.800"/><circle cx="14" cy="3.500" r="1.200" fill="#fff" stroke="#444" stroke-width="0.800"/><rect x="14" y="14" width="8.5" height="8.5" rx="1.300" fill="#6aa55a" stroke="#4c8a3e" stroke-width="0.800"/><path d="M18.25 15.5v5.5M15.5 18.25h5.5" stroke="#fff" stroke-width="1.700"/></svg>
<svg class="a" style="left:4.2px;top:331.7px;" width="21.6" height="21.6" viewBox="0 0 24 24"><path d="M4 5c2-3 6-3 8-1.500c3-1.500 6 .5 6 4s-2 5-2.500 7s-1 4-2.500 4s-2-1-2-3v-3c-3 1-6 0-7-3s-1-3.500 0-4.500z" fill="#5b8cc4" stroke="#2f5688" stroke-width="1"/><path d="M12 4c1 2 1 6 0 9" fill="none" stroke="#2f5688" stroke-width="0.800"/><circle cx="8.500" cy="6.500" r="0.800" fill="#fff"/><rect x="14" y="14" width="8.5" height="8.5" rx="1.300" fill="#6aa55a" stroke="#4c8a3e" stroke-width="0.800"/><path d="M18.25 15.5v5.5M15.5 18.25h5.5" stroke="#fff" stroke-width="1.700"/></svg>
<svg class="a" style="left:4.2px;top:357.2px;" width="21.6" height="21.6" viewBox="0 0 24 24"><circle cx="10.500" cy="11" r="8.500" fill="#c9dcf2" stroke="#3f6da3" stroke-width="1.200"/><path d="M2 11h17M10.500 2.500v17M4 6.500h13M4 15.500h13" stroke="#7aa3d0" stroke-width="0.800"/><path d="M5 7c1.500-2 3.500-1.500 3.500.5s-1 2.500-2 4s-2-2-1.500-4.500zM11 5c2-1 4 0 4.500 2s-1 3-2.500 2.500s-2.500-3-2-4.500zM9 13c1.500 0 2 1.500 1.500 3s-2 1-1.500-3z" fill="#2f5688"/><rect x="14" y="14" width="8.5" height="8.5" rx="1.300" fill="#6aa55a" stroke="#4c8a3e" stroke-width="0.800"/><path d="M18.25 15.5v5.5M15.5 18.25h5.5" stroke="#fff" stroke-width="1.700"/></svg>
<svg class="a" style="left:4.2px;top:381.7px;" width="21.6" height="21.6" viewBox="0 0 24 24"><circle cx="10.500" cy="11" r="8.500" fill="#2c4a75" stroke="#1d3557" stroke-width="1.200"/><ellipse cx="10.500" cy="11" rx="4" ry="8.500" fill="none" stroke="#c9dcf2" stroke-width="1"/><path d="M2 11h17M3.500 6.500h14M3.500 15.500h14" stroke="#c9dcf2" stroke-width="1.500"/><rect x="14" y="14" width="8.5" height="8.5" rx="1.300" fill="#6aa55a" stroke="#4c8a3e" stroke-width="0.800"/><path d="M18.25 15.5v5.5M15.5 18.25h5.5" stroke="#fff" stroke-width="1.700"/></svg>
<svg class="a" style="left:4.2px;top:406.7px;" width="21.6" height="21.6" viewBox="0 0 24 24"><circle cx="10.500" cy="11" r="8.500" fill="#dbe8f7" stroke="#3f6da3" stroke-width="1.200"/><ellipse cx="10.500" cy="11" rx="4" ry="8.500" fill="none" stroke="#7aa3d0" stroke-width="0.800"/><path d="M2 11h17M3.500 6.500h14M3.500 15.500h14" stroke="#7aa3d0" stroke-width="0.800"/><path d="M5.500 6l4.500 10l4-9" fill="none" stroke="#333" stroke-width="1.200"/><circle cx="10" cy="16" r="1.300" fill="#fff" stroke="#333" stroke-width="0.800"/><rect x="14" y="14" width="8.5" height="8.5" rx="1.300" fill="#6aa55a" stroke="#4c8a3e" stroke-width="0.800"/><path d="M18.25 15.5v5.5M15.5 18.25h5.5" stroke="#fff" stroke-width="1.700"/></svg>
<svg class="a" style="left:4.2px;top:431.7px;" width="21.6" height="21.6" viewBox="0 0 24 24"><path d="M3 4l6.500 14l5.500-13h6" fill="none" stroke="#444" stroke-width="1.300"/><circle cx="3.500" cy="4.500" r="1.600" fill="#fff" stroke="#444" stroke-width="1"/><circle cx="9.500" cy="18" r="1.600" fill="#fff" stroke="#444" stroke-width="1"/><circle cx="15" cy="5" r="1.600" fill="#fff" stroke="#444" stroke-width="1"/><circle cx="20.500" cy="4.500" r="1.600" fill="#fff" stroke="#444" stroke-width="1"/><rect x="14" y="13.5" width="8.5" height="8.5" rx="1.200" fill="#ecd040" stroke="#c9a52a" stroke-width="0.900"/><path d="M18.25 14.9v5.7M15.4 17.75h5.7M16.3 15.8l3.9 3.9M20.2 15.8l-3.9 3.9" stroke="#fffdf0" stroke-width="1.050"/></svg>
<svg class="a" style="left:9.7px;top:458.2px;" width="21.6" height="21.6" viewBox="0 0 24 24"><rect x="2.500" y="2.500" width="18" height="17" rx="1" fill="#4f7fb8" stroke="#2f5688" stroke-width="1"/><path d="M3 7h17M3 11h17M3 15h17M7 3v16M11.500 3v16M16 3v16" stroke="#dbe8f7" stroke-width="1.100"/><rect x="15" y="14.5" width="8.5" height="8.5" rx="1.300" fill="#6aa55a" stroke="#4c8a3e" stroke-width="0.800"/><path d="M19.25 16v5.5M16.5 18.75h5.5" stroke="#fff" stroke-width="1.700"/></svg>
<svg class="a" style="left:30.25px;top:341.5px;" width="7.5" height="4.5" viewBox="0 0 7.5 4.5"><path d="M0 0h7.5 l-3.75 4z" fill="#111"/></svg>
<svg class="a" style="left:30.25px;top:367px;" width="7.5" height="4.5" viewBox="0 0 7.5 4.5"><path d="M0 0h7.5 l-3.75 4z" fill="#111"/></svg>
<svg class="a" style="left:30.25px;top:416px;" width="7.5" height="4.5" viewBox="0 0 7.5 4.5"><path d="M0 0h7.5 l-3.75 4z" fill="#111"/></svg>
<svg class="a" style="left:30.25px;top:441.5px;" width="7.5" height="4.5" viewBox="0 0 7.5 4.5"><path d="M0 0h7.5 l-3.75 4z" fill="#111"/></svg>
<svg class="a" style="left:43.9px;top:201.9px;" width="17.28" height="17.28" viewBox="0 0 24 24"><path d="M3 15l7-5l4 5l-7 5z" fill="#e1552b" stroke="#a33a1a" stroke-width="0.600"/><path d="M4.500 13.800l5.500-3.800l1.300 1.700l-5.500 3.800z" fill="#f2d84c"/><path d="M7 17.500l5.500-3.800l1.200 1.500l-5.500 3.800z" fill="#5b8cc4"/><path d="M12 12.500l6.500-7" stroke="#e8a030" stroke-width="3" stroke-linecap="round"/><path d="M9.500 11l3.500 3.500" stroke="#c8c8c8" stroke-width="1.500"/></svg>
<svg class="a" style="left:62.9px;top:201.9px;" width="17.28" height="17.28" viewBox="0 0 24 24"><path d="M4 9v11h10" fill="none" stroke="#b5b5b5" stroke-width="1"/><path d="M6.500 6.500h11v12h-11z" fill="#f4f4f4" stroke="#8f8f8f" stroke-width="1"/><path d="M9.500 12V5a2.300 2.300 0 0 1 4.600 0v8a1.200 1.200 0 0 1-2.400 0V7" fill="none" stroke="#6d6d6d" stroke-width="1"/><rect x="13.5" y="14.5" width="7.5" height="7.5" rx="1.300" fill="#6aa55a" stroke="#4c8a3e" stroke-width="0.800"/><path d="M17.25 16v4.5M15 18.25h4.5" stroke="#fff" stroke-width="1.700"/></svg>
<svg class="a" style="left:82.9px;top:201.9px;" width="17.28" height="17.28" viewBox="0 0 24 24"><path d="M2.500 11c4-6.500 13-6.500 17.500 0c-4.500 6.500-13.500 6.500-17.500 0z" fill="#dfe6ee" stroke="#7a8aa0" stroke-width="1.100"/><path d="M3 9.500c4-5 12-5 16.500 0" fill="none" stroke="#8a9ab0" stroke-width="1"/><circle cx="11" cy="11" r="3.800" fill="#4f7fb8" stroke="#2f5688" stroke-width="0.800"/><circle cx="11" cy="11" r="1.600" fill="#1d3557"/><path d="M13 16.500h8.500l-4.250 4.500z" fill="#111"/></svg>
<svg class="a" style="left:101.4px;top:201.9px;" width="17.28" height="17.28" viewBox="0 0 24 24"><path d="M3.500 4.500h17l-6.500 8v8.500l-4-2v-6.500z" fill="#7aa6d6" stroke="#3f6da3" stroke-width="1" stroke-linejoin="round"/><path d="M3.500 4.500h17v2h-17z" fill="#f2d84c" stroke="#c9a52a" stroke-width="0.800"/></svg>
<svg class="a" style="left:120.9px;top:201.9px;" width="17.28" height="17.28" viewBox="0 0 24 24"><text x="3" y="15.500" font-size="20" font-family="Liberation Serif,serif" fill="#5a2d6e">ε</text><path d="M12.500 14h8l-2.300 3v4.500h-3.400v-4.500z" fill="#d9d9d9" stroke="#8a8a8a" stroke-width="0.900"/></svg>
<svg class="a" style="left:152.9px;top:201.9px;" width="17.28" height="17.28" viewBox="0 0 24 24"><rect x="3.500" y="4" width="7" height="16" fill="#fff" stroke="#8a8a8a" stroke-width="0.900"/><path d="M5 8h4M5 12h4M5 16h4" stroke="#e0a030" stroke-width="1.600"/><path d="M15.500 3v11h-3.500l5.500 7l5.500-7h-3.500v-11z" fill="#5b8cc4" stroke="#2f5688" stroke-width="0.900" transform="translate(-2 0) scale(0.920)"/></svg>
<svg class="a" style="left:171.9px;top:201.9px;" width="17.28" height="17.28" viewBox="0 0 24 24"><rect x="3.500" y="4" width="7" height="16" fill="#fff" stroke="#8a8a8a" stroke-width="0.900"/><path d="M5 8h4M5 12h4M5 16h4" stroke="#e0a030" stroke-width="1.600"/><path d="M15.500 21v-11h-3.500l5.500-7l5.500 7h-3.500v11z" fill="#5b8cc4" stroke="#2f5688" stroke-width="0.900" transform="translate(-2 1) scale(0.920)"/></svg>
<svg class="a" style="left:190.9px;top:201.9px;" width="17.28" height="17.28" viewBox="0 0 24 24"><rect x="3.500" y="4.500" width="14" height="13" fill="#fbfbfb" stroke="#9a9a9a" stroke-width="1"/><rect x="13.500" y="15" width="8" height="5" rx="1" fill="#d9302c" stroke="#9a1a18" stroke-width="0.600"/><path d="M15.500 17.500h4" stroke="#fff" stroke-width="1.400"/></svg>
<svg class="a" style="left:142.0px;top:209px;" width="7" height="4.5" viewBox="0 0 7 4.5"><path d="M0 0h7 l-3.5 4z" fill="#111"/></svg>
<div class="a" style="left:1298px;top:222px;width:304px;height:608px;background:#fff;border:1px solid #828790;"></div>
<div class="a" style="left:1298px;top:171px;width:302px;height:26px;background:#d9d9d9;"></div>
<svg class="a" style="left:1561px;top:177px;" width="13" height="14" viewBox="0 0 13 14"><path d="M4 4V1.500h8v7.500H9.500" fill="none" stroke="#111" stroke-width="1.800"/><rect x="1" y="5" width="8" height="8" fill="none" stroke="#111" stroke-width="1.800"/></svg>
<svg class="a" style="left:1581px;top:180px;" width="12" height="11" viewBox="0 0 12 11"><path d="M1 0.500L11 10.500M11 0.500L1 10.500" stroke="#111" stroke-width="2.300"/></svg>
<div class="a" style="left:289px;top:171px;width:1006px;height:659px;background:#6a6a6a;"></div>
<svg class="a" style="left:290px;top:172px;" width="1004" height="657" viewBox="0 0 1004 657"><defs><g id="tr"><path d="M-6 -2a2.800 3.800 0 1 1 5.600 0a2.800 3.800 0 1 1 -5.600 0M-3.200 1.800v4.700M0.800 3l3.100-8.500l3.100 8.500zM3.900 3v3.500" fill="none" stroke="#99c38b" stroke-width="1.050" stroke-linejoin="round"/></g><clipPath id="mc"><rect x="0" y="0" width="1004" height="657"/></clipPath></defs><g clip-path="url(#mc)"><rect x="0" y="0" width="1004" height="657" fill="#add19e"/><path d="M951.0 554.0 L1006.0 554.0 L1006.0 596.0 L985.0 584.0 L968.0 571.0 L951.0 561.0 Z" fill="#eef0d8"/><ellipse cx="915" cy="581" rx="8" ry="5" fill="#aad3df"/><use href="#tr" x="-27" y="-46"/><use href="#tr" x="25" y="-48"/><use href="#tr" x="68" y="-42"/><use href="#tr" x="102" y="-39"/><use href="#tr" x="147" y="-40"/><use href="#tr" x="193" y="-47"/><use href="#tr" x="245" y="-32"/><use href="#tr" x="284" y="-45"/><use href="#tr" x="340" y="-30"/><use href="#tr" x="384" y="-41"/><use href="#tr" x="437" y="-48"/><use href="#tr" x="480" y="-43"/><use href="#tr" x="509" y="-47"/><use href="#tr" x="558" y="-33"/><use href="#tr" x="600" y="-37"/><use href="#tr" x="655" y="-42"/><use href="#tr" x="698" y="-48"/><use href="#tr" x="732" y="-45"/><use href="#tr" x="791" y="-40"/><use href="#tr" x="828" y="-37"/><use href="#tr" x="876" y="-43"/><use href="#tr" x="928" y="-35"/><use href="#tr" x="961" y="-38"/><use href="#tr" x="1013" y="-31"/><use href="#tr" x="1062" y="-43"/><use href="#tr" x="1113" y="-47"/><use href="#tr" x="-47" y="5"/><use href="#tr" x="-8" y="-0"/><use href="#tr" x="35" y="3"/><use href="#tr" x="96" y="1"/><use href="#tr" x="143" y="-4"/><use href="#tr" x="184" y="2"/><use href="#tr" x="227" y="-1"/><use href="#tr" x="277" y="9"/><use href="#tr" x="314" y="3"/><use href="#tr" x="350" y="4"/><use href="#tr" x="408" y="10"/><use href="#tr" x="457" y="-4"/><use href="#tr" x="492" y="3"/><use href="#tr" x="529" y="-1"/><use href="#tr" x="578" y="-8"/><use href="#tr" x="620" y="5"/><use href="#tr" x="667" y="-5"/><use href="#tr" x="718" y="7"/><use href="#tr" x="756" y="-1"/><use href="#tr" x="811" y="8"/><use href="#tr" x="862" y="7"/><use href="#tr" x="895" y="-2"/><use href="#tr" x="942" y="8"/><use href="#tr" x="1000" y="-7"/><use href="#tr" x="1028" y="-5"/><use href="#tr" x="1074" y="-0"/><use href="#tr" x="-21" y="34"/><use href="#tr" x="11" y="37"/><use href="#tr" x="64" y="40"/><use href="#tr" x="122" y="43"/><use href="#tr" x="157" y="41"/><use href="#tr" x="206" y="30"/><use href="#tr" x="256" y="45"/><use href="#tr" x="300" y="45"/><use href="#tr" x="335" y="37"/><use href="#tr" x="373" y="42"/><use href="#tr" x="417" y="30"/><use href="#tr" x="466" y="32"/><use href="#tr" x="513" y="30"/><use href="#tr" x="551" y="32"/><use href="#tr" x="598" y="36"/><use href="#tr" x="642" y="46"/><use href="#tr" x="700" y="32"/><use href="#tr" x="737" y="36"/><use href="#tr" x="784" y="31"/><use href="#tr" x="840" y="49"/><use href="#tr" x="876" y="39"/><use href="#tr" x="913" y="31"/><use href="#tr" x="964" y="34"/><use href="#tr" x="1019" y="32"/><use href="#tr" x="1047" y="48"/><use href="#tr" x="1103" y="32"/><use href="#tr" x="-44" y="69"/><use href="#tr" x="1" y="88"/><use href="#tr" x="53" y="82"/><use href="#tr" x="85" y="75"/><use href="#tr" x="128" y="83"/><use href="#tr" x="181" y="84"/><use href="#tr" x="221" y="72"/><use href="#tr" x="277" y="88"/><use href="#tr" x="323" y="84"/><use href="#tr" x="367" y="83"/><use href="#tr" x="399" y="78"/><use href="#tr" x="447" y="69"/><use href="#tr" x="485" y="74"/><use href="#tr" x="535" y="82"/><use href="#tr" x="595" y="77"/><use href="#tr" x="640" y="88"/><use href="#tr" x="685" y="75"/><use href="#tr" x="714" y="73"/><use href="#tr" x="758" y="72"/><use href="#tr" x="813" y="86"/><use href="#tr" x="862" y="78"/><use href="#tr" x="903" y="84"/><use href="#tr" x="936" y="81"/><use href="#tr" x="999" y="84"/><use href="#tr" x="1041" y="78"/><use href="#tr" x="1073" y="84"/><use href="#tr" x="-27" y="123"/><use href="#tr" x="32" y="115"/><use href="#tr" x="65" y="126"/><use href="#tr" x="117" y="110"/><use href="#tr" x="149" y="110"/><use href="#tr" x="211" y="123"/><use href="#tr" x="239" y="124"/><use href="#tr" x="303" y="120"/><use href="#tr" x="334" y="118"/><use href="#tr" x="374" y="107"/><use href="#tr" x="437" y="120"/><use href="#tr" x="473" y="126"/><use href="#tr" x="516" y="124"/><use href="#tr" x="569" y="111"/><use href="#tr" x="602" y="113"/><use href="#tr" x="646" y="119"/><use href="#tr" x="692" y="115"/><use href="#tr" x="734" y="125"/><use href="#tr" x="784" y="116"/><use href="#tr" x="834" y="125"/><use href="#tr" x="875" y="125"/><use href="#tr" x="922" y="118"/><use href="#tr" x="968" y="107"/><use href="#tr" x="1011" y="111"/><use href="#tr" x="1046" y="123"/><use href="#tr" x="1095" y="116"/><use href="#tr" x="-40" y="157"/><use href="#tr" x="-4" y="156"/><use href="#tr" x="46" y="162"/><use href="#tr" x="81" y="157"/><use href="#tr" x="129" y="152"/><use href="#tr" x="186" y="156"/><use href="#tr" x="226" y="161"/><use href="#tr" x="279" y="155"/><use href="#tr" x="317" y="156"/><use href="#tr" x="360" y="160"/><use href="#tr" x="404" y="157"/><use href="#tr" x="450" y="165"/><use href="#tr" x="499" y="164"/><use href="#tr" x="550" y="151"/><use href="#tr" x="586" y="165"/><use href="#tr" x="637" y="149"/><use href="#tr" x="667" y="155"/><use href="#tr" x="711" y="151"/><use href="#tr" x="756" y="159"/><use href="#tr" x="816" y="164"/><use href="#tr" x="847" y="160"/><use href="#tr" x="904" y="149"/><use href="#tr" x="953" y="165"/><use href="#tr" x="984" y="165"/><use href="#tr" x="1033" y="156"/><use href="#tr" x="1091" y="163"/><use href="#tr" x="-30" y="194"/><use href="#tr" x="22" y="192"/><use href="#tr" x="60" y="191"/><use href="#tr" x="117" y="185"/><use href="#tr" x="158" y="194"/><use href="#tr" x="191" y="192"/><use href="#tr" x="250" y="195"/><use href="#tr" x="282" y="205"/><use href="#tr" x="343" y="204"/><use href="#tr" x="373" y="190"/><use href="#tr" x="417" y="201"/><use href="#tr" x="467" y="188"/><use href="#tr" x="515" y="203"/><use href="#tr" x="569" y="190"/><use href="#tr" x="599" y="203"/><use href="#tr" x="654" y="199"/><use href="#tr" x="688" y="186"/><use href="#tr" x="746" y="194"/><use href="#tr" x="778" y="204"/><use href="#tr" x="835" y="201"/><use href="#tr" x="868" y="202"/><use href="#tr" x="912" y="202"/><use href="#tr" x="966" y="192"/><use href="#tr" x="1013" y="204"/><use href="#tr" x="1052" y="188"/><use href="#tr" x="1103" y="190"/><use href="#tr" x="-54" y="227"/><use href="#tr" x="-10" y="228"/><use href="#tr" x="41" y="230"/><use href="#tr" x="96" y="230"/><use href="#tr" x="135" y="228"/><use href="#tr" x="177" y="224"/><use href="#tr" x="220" y="224"/><use href="#tr" x="275" y="235"/><use href="#tr" x="308" y="233"/><use href="#tr" x="370" y="226"/><use href="#tr" x="412" y="233"/><use href="#tr" x="450" y="241"/><use href="#tr" x="493" y="234"/><use href="#tr" x="544" y="244"/><use href="#tr" x="582" y="241"/><use href="#tr" x="635" y="237"/><use href="#tr" x="673" y="231"/><use href="#tr" x="710" y="227"/><use href="#tr" x="756" y="239"/><use href="#tr" x="805" y="227"/><use href="#tr" x="846" y="241"/><use href="#tr" x="908" y="237"/><use href="#tr" x="940" y="229"/><use href="#tr" x="985" y="233"/><use href="#tr" x="1027" y="233"/><use href="#tr" x="1075" y="243"/><use href="#tr" x="-13" y="274"/><use href="#tr" x="16" y="282"/><use href="#tr" x="63" y="270"/><use href="#tr" x="101" y="271"/><use href="#tr" x="156" y="273"/><use href="#tr" x="195" y="273"/><use href="#tr" x="236" y="268"/><use href="#tr" x="283" y="271"/><use href="#tr" x="327" y="263"/><use href="#tr" x="378" y="268"/><use href="#tr" x="429" y="274"/><use href="#tr" x="478" y="276"/><use href="#tr" x="522" y="281"/><use href="#tr" x="560" y="270"/><use href="#tr" x="618" y="266"/><use href="#tr" x="657" y="276"/><use href="#tr" x="687" y="280"/><use href="#tr" x="751" y="276"/><use href="#tr" x="792" y="279"/><use href="#tr" x="824" y="273"/><use href="#tr" x="877" y="280"/><use href="#tr" x="929" y="280"/><use href="#tr" x="969" y="281"/><use href="#tr" x="1016" y="277"/><use href="#tr" x="1051" y="264"/><use href="#tr" x="1094" y="270"/><use href="#tr" x="-54" y="319"/><use href="#tr" x="1" y="315"/><use href="#tr" x="48" y="316"/><use href="#tr" x="90" y="302"/><use href="#tr" x="142" y="317"/><use href="#tr" x="180" y="313"/><use href="#tr" x="229" y="303"/><use href="#tr" x="275" y="307"/><use href="#tr" x="306" y="307"/><use href="#tr" x="365" y="306"/><use href="#tr" x="410" y="322"/><use href="#tr" x="450" y="310"/><use href="#tr" x="495" y="316"/><use href="#tr" x="546" y="314"/><use href="#tr" x="588" y="304"/><use href="#tr" x="622" y="307"/><use href="#tr" x="680" y="308"/><use href="#tr" x="721" y="302"/><use href="#tr" x="755" y="307"/><use href="#tr" x="814" y="316"/><use href="#tr" x="859" y="308"/><use href="#tr" x="900" y="311"/><use href="#tr" x="944" y="304"/><use href="#tr" x="999" y="306"/><use href="#tr" x="1046" y="321"/><use href="#tr" x="1069" y="311"/><use href="#tr" x="-16" y="360"/><use href="#tr" x="21" y="346"/><use href="#tr" x="61" y="360"/><use href="#tr" x="106" y="353"/><use href="#tr" x="149" y="351"/><use href="#tr" x="212" y="344"/><use href="#tr" x="254" y="351"/><use href="#tr" x="301" y="355"/><use href="#tr" x="331" y="359"/><use href="#tr" x="382" y="341"/><use href="#tr" x="416" y="351"/><use href="#tr" x="471" y="347"/><use href="#tr" x="509" y="348"/><use href="#tr" x="558" y="358"/><use href="#tr" x="596" y="356"/><use href="#tr" x="659" y="343"/><use href="#tr" x="706" y="355"/><use href="#tr" x="751" y="347"/><use href="#tr" x="784" y="349"/><use href="#tr" x="843" y="353"/><use href="#tr" x="874" y="350"/><use href="#tr" x="917" y="342"/><use href="#tr" x="958" y="358"/><use href="#tr" x="1007" y="360"/><use href="#tr" x="1051" y="346"/><use href="#tr" x="1102" y="345"/><use href="#tr" x="-48" y="399"/><use href="#tr" x="8" y="396"/><use href="#tr" x="48" y="398"/><use href="#tr" x="100" y="391"/><use href="#tr" x="140" y="381"/><use href="#tr" x="185" y="389"/><use href="#tr" x="231" y="393"/><use href="#tr" x="265" y="381"/><use href="#tr" x="324" y="383"/><use href="#tr" x="359" y="387"/><use href="#tr" x="401" y="395"/><use href="#tr" x="460" y="385"/><use href="#tr" x="498" y="386"/><use href="#tr" x="541" y="388"/><use href="#tr" x="578" y="383"/><use href="#tr" x="624" y="398"/><use href="#tr" x="675" y="384"/><use href="#tr" x="729" y="400"/><use href="#tr" x="764" y="383"/><use href="#tr" x="803" y="382"/><use href="#tr" x="852" y="382"/><use href="#tr" x="894" y="385"/><use href="#tr" x="947" y="398"/><use href="#tr" x="995" y="388"/><use href="#tr" x="1033" y="390"/><use href="#tr" x="1077" y="387"/><use href="#tr" x="-33" y="425"/><use href="#tr" x="32" y="422"/><use href="#tr" x="67" y="432"/><use href="#tr" x="120" y="423"/><use href="#tr" x="152" y="424"/><use href="#tr" x="200" y="428"/><use href="#tr" x="257" y="436"/><use href="#tr" x="300" y="419"/><use href="#tr" x="327" y="433"/><use href="#tr" x="391" y="428"/><use href="#tr" x="429" y="419"/><use href="#tr" x="470" y="438"/><use href="#tr" x="524" y="436"/><use href="#tr" x="572" y="424"/><use href="#tr" x="598" y="422"/><use href="#tr" x="652" y="433"/><use href="#tr" x="707" y="433"/><use href="#tr" x="745" y="434"/><use href="#tr" x="786" y="430"/><use href="#tr" x="822" y="435"/><use href="#tr" x="871" y="437"/><use href="#tr" x="925" y="425"/><use href="#tr" x="959" y="424"/><use href="#tr" x="1015" y="433"/><use href="#tr" x="1048" y="420"/><use href="#tr" x="1103" y="431"/><use href="#tr" x="-47" y="462"/><use href="#tr" x="2" y="458"/><use href="#tr" x="41" y="467"/><use href="#tr" x="100" y="471"/><use href="#tr" x="143" y="468"/><use href="#tr" x="174" y="463"/><use href="#tr" x="235" y="472"/><use href="#tr" x="266" y="458"/><use href="#tr" x="315" y="471"/><use href="#tr" x="358" y="463"/><use href="#tr" x="409" y="477"/><use href="#tr" x="444" y="459"/><use href="#tr" x="491" y="466"/><use href="#tr" x="544" y="462"/><use href="#tr" x="592" y="473"/><use href="#tr" x="630" y="462"/><use href="#tr" x="685" y="464"/><use href="#tr" x="727" y="463"/><use href="#tr" x="759" y="473"/><use href="#tr" x="805" y="477"/><use href="#tr" x="855" y="462"/><use href="#tr" x="894" y="466"/><use href="#tr" x="949" y="477"/><use href="#tr" x="982" y="466"/><use href="#tr" x="1029" y="477"/><use href="#tr" x="1072" y="459"/><use href="#tr" x="-33" y="505"/><use href="#tr" x="31" y="515"/><use href="#tr" x="72" y="517"/><use href="#tr" x="121" y="504"/><use href="#tr" x="150" y="516"/><use href="#tr" x="207" y="498"/><use href="#tr" x="251" y="505"/><use href="#tr" x="289" y="504"/><use href="#tr" x="330" y="497"/><use href="#tr" x="377" y="504"/><use href="#tr" x="437" y="499"/><use href="#tr" x="482" y="501"/><use href="#tr" x="514" y="513"/><use href="#tr" x="569" y="506"/><use href="#tr" x="597" y="506"/><use href="#tr" x="649" y="515"/><use href="#tr" x="690" y="504"/><use href="#tr" x="751" y="498"/><use href="#tr" x="785" y="513"/><use href="#tr" x="838" y="498"/><use href="#tr" x="867" y="498"/><use href="#tr" x="931" y="502"/><use href="#tr" x="972" y="515"/><use href="#tr" x="1008" y="502"/><use href="#tr" x="1067" y="509"/><use href="#tr" x="1097" y="511"/><use href="#tr" x="-49" y="542"/><use href="#tr" x="-11" y="551"/><use href="#tr" x="54" y="549"/><use href="#tr" x="100" y="536"/><use href="#tr" x="129" y="546"/><use href="#tr" x="190" y="555"/><use href="#tr" x="223" y="541"/><use href="#tr" x="268" y="546"/><use href="#tr" x="324" y="540"/><use href="#tr" x="367" y="551"/><use href="#tr" x="412" y="551"/><use href="#tr" x="452" y="543"/><use href="#tr" x="491" y="543"/><use href="#tr" x="546" y="538"/><use href="#tr" x="578" y="551"/><use href="#tr" x="624" y="537"/><use href="#tr" x="665" y="547"/><use href="#tr" x="716" y="556"/><use href="#tr" x="773" y="556"/><use href="#tr" x="805" y="538"/><use href="#tr" x="846" y="546"/><use href="#tr" x="905" y="545"/><use href="#tr" x="939" y="544"/><use href="#tr" x="993" y="549"/><use href="#tr" x="1040" y="553"/><use href="#tr" x="1084" y="538"/><use href="#tr" x="-16" y="581"/><use href="#tr" x="23" y="582"/><use href="#tr" x="72" y="579"/><use href="#tr" x="106" y="580"/><use href="#tr" x="149" y="593"/><use href="#tr" x="204" y="582"/><use href="#tr" x="245" y="595"/><use href="#tr" x="292" y="580"/><use href="#tr" x="344" y="588"/><use href="#tr" x="393" y="577"/><use href="#tr" x="426" y="591"/><use href="#tr" x="479" y="593"/><use href="#tr" x="507" y="581"/><use href="#tr" x="554" y="579"/><use href="#tr" x="617" y="587"/><use href="#tr" x="661" y="582"/><use href="#tr" x="705" y="584"/><use href="#tr" x="737" y="591"/><use href="#tr" x="797" y="577"/><use href="#tr" x="834" y="587"/><use href="#tr" x="871" y="582"/><use href="#tr" x="914" y="579"/><use href="#tr" x="962" y="587"/><use href="#tr" x="1015" y="579"/><use href="#tr" x="1046" y="582"/><use href="#tr" x="1106" y="579"/><use href="#tr" x="-49" y="618"/><use href="#tr" x="6" y="625"/><use href="#tr" x="35" y="616"/><use href="#tr" x="88" y="625"/><use href="#tr" x="138" y="616"/><use href="#tr" x="173" y="628"/><use href="#tr" x="223" y="620"/><use href="#tr" x="266" y="633"/><use href="#tr" x="311" y="625"/><use href="#tr" x="357" y="622"/><use href="#tr" x="413" y="634"/><use href="#tr" x="447" y="618"/><use href="#tr" x="500" y="618"/><use href="#tr" x="529" y="632"/><use href="#tr" x="583" y="630"/><use href="#tr" x="628" y="632"/><use href="#tr" x="674" y="617"/><use href="#tr" x="709" y="625"/><use href="#tr" x="768" y="632"/><use href="#tr" x="801" y="626"/><use href="#tr" x="852" y="624"/><use href="#tr" x="892" y="620"/><use href="#tr" x="945" y="633"/><use href="#tr" x="981" y="624"/><use href="#tr" x="1042" y="633"/><use href="#tr" x="1073" y="617"/><use href="#tr" x="-13" y="673"/><use href="#tr" x="22" y="654"/><use href="#tr" x="76" y="661"/><use href="#tr" x="121" y="665"/><use href="#tr" x="164" y="656"/><use href="#tr" x="208" y="657"/><use href="#tr" x="245" y="670"/><use href="#tr" x="299" y="657"/><use href="#tr" x="331" y="661"/><use href="#tr" x="382" y="661"/><use href="#tr" x="419" y="658"/><use href="#tr" x="477" y="671"/><use href="#tr" x="507" y="664"/><use href="#tr" x="568" y="654"/><use href="#tr" x="614" y="655"/><use href="#tr" x="654" y="664"/><use href="#tr" x="700" y="659"/><use href="#tr" x="740" y="665"/><use href="#tr" x="785" y="666"/><use href="#tr" x="831" y="662"/><use href="#tr" x="867" y="665"/><use href="#tr" x="922" y="658"/><use href="#tr" x="973" y="669"/><use href="#tr" x="1011" y="657"/><use href="#tr" x="1056" y="655"/><use href="#tr" x="1094" y="662"/><use href="#tr" x="-54" y="701"/><use href="#tr" x="0" y="693"/><use href="#tr" x="48" y="694"/><use href="#tr" x="95" y="708"/><use href="#tr" x="135" y="693"/><use href="#tr" x="180" y="700"/><use href="#tr" x="235" y="695"/><use href="#tr" x="278" y="712"/><use href="#tr" x="320" y="708"/><use href="#tr" x="353" y="712"/><use href="#tr" x="405" y="711"/><use href="#tr" x="459" y="695"/><use href="#tr" x="501" y="711"/><use href="#tr" x="530" y="699"/><use href="#tr" x="591" y="695"/><use href="#tr" x="639" y="697"/><use href="#tr" x="682" y="695"/><use href="#tr" x="720" y="710"/><use href="#tr" x="759" y="697"/><use href="#tr" x="810" y="698"/><use href="#tr" x="845" y="696"/><use href="#tr" x="893" y="711"/><use href="#tr" x="949" y="710"/><use href="#tr" x="983" y="708"/><use href="#tr" x="1027" y="703"/><use href="#tr" x="1083" y="699"/><path d="M91.0 629.0 L269.0 589.0 L278.0 638.0 L230.0 648.0 L180.0 658.0 L91.0 658.0 Z" fill="#cdebb0"/><path d="M306.0 442.7 L276.7 452.5 L244.9 464.7 L222.8 472.0 L215.5 479.4 L205.7 491.7 L183.6 503.9 L171.4 518.6 L156.7 530.8 L134.7 545.5 L110.2 556.5 L93.0 567.6 L73.5 581.0 L49.0 597.0 L24.5 612.9 L0.0 629.0" fill="none" stroke="#a6cfe0" stroke-width="3.600" stroke-linejoin="round" opacity="0.95"/><path d="M116.3 479.4 L98.0 499.0 L80.8 516.0 L63.7 533.3 L49.0 552.9 L39.2 572.5 L31.8 589.6 L26.0 610.0" fill="none" stroke="#a6cfe0" stroke-width="3.600" stroke-linejoin="round" opacity="0.95"/><path id="vr" d="M7.0 618.0 L28.0 603.0 L55.0 586.0 L80.0 571.0 L105.0 557.0" fill="none"/><text font-size="11" font-style="italic" fill="#6f95c8" stroke="#ffffff" stroke-width="2" stroke-opacity="0.5" paint-order="stroke" font-family="Liberation Sans, sans-serif" letter-spacing="0.3"><textPath href="#vr">Vorderer Rotenbach</textPath></text><path d="M108.0 0.0 L0.0 106.0" stroke="#d9d7b0" stroke-width="1.800" fill="none"/><path d="M108.0 0.0 L0.0 106.0" stroke="#b9964f" stroke-width="1.800" stroke-dasharray="7 3" fill="none"/><path d="M150.0 662.0 C155.0 661.3 166.7 659.8 180.0 658.0 C193.3 656.2 212.2 653.5 230.0 651.0 C247.8 648.5 270.3 645.1 287.0 643.0 C303.7 640.9 316.8 639.4 330.0 638.5 C343.2 637.6 349.3 637.5 366.0 637.5 C382.7 637.5 411.0 638.1 430.0 638.5 C449.0 638.9 466.7 639.3 480.0 639.6 C493.3 639.9 493.3 639.9 510.0 640.5 C526.7 641.1 563.3 642.8 580.0 643.5 C596.7 644.2 598.0 644.2 610.0 645.0 C622.0 645.8 637.8 647.2 652.0 648.0 C666.2 648.8 683.7 649.4 695.0 649.5 C706.3 649.6 712.5 649.1 720.0 648.5 C727.5 647.9 732.5 647.3 740.0 646.0 C747.5 644.7 756.7 642.6 765.0 640.5 C773.3 638.4 781.7 636.3 790.0 633.6 C798.3 630.9 806.5 627.6 815.0 624.5 C823.5 621.4 831.0 618.4 841.0 614.8 C851.0 611.2 863.8 605.8 875.0 602.7 C886.2 599.7 897.7 597.7 908.0 596.5 C918.3 595.3 927.0 595.0 937.0 595.4 C947.0 595.8 956.8 596.3 968.0 599.0 C979.2 601.7 998.0 609.4 1004.0 611.5" fill="none" stroke="#c9c9c0" stroke-width="11.500"/><path d="M150.0 662.0 C155.0 661.3 166.7 659.8 180.0 658.0 C193.3 656.2 212.2 653.5 230.0 651.0 C247.8 648.5 270.3 645.1 287.0 643.0 C303.7 640.9 316.8 639.4 330.0 638.5 C343.2 637.6 349.3 637.5 366.0 637.5 C382.7 637.5 411.0 638.1 430.0 638.5 C449.0 638.9 466.7 639.3 480.0 639.6 C493.3 639.9 493.3 639.9 510.0 640.5 C526.7 641.1 563.3 642.8 580.0 643.5 C596.7 644.2 598.0 644.2 610.0 645.0 C622.0 645.8 637.8 647.2 652.0 648.0 C666.2 648.8 683.7 649.4 695.0 649.5 C706.3 649.6 712.5 649.1 720.0 648.5 C727.5 647.9 732.5 647.3 740.0 646.0 C747.5 644.7 756.7 642.6 765.0 640.5 C773.3 638.4 781.7 636.3 790.0 633.6 C798.3 630.9 806.5 627.6 815.0 624.5 C823.5 621.4 831.0 618.4 841.0 614.8 C851.0 611.2 863.8 605.8 875.0 602.7 C886.2 599.7 897.7 597.7 908.0 596.5 C918.3 595.3 927.0 595.0 937.0 595.4 C947.0 595.8 956.8 596.3 968.0 599.0 C979.2 601.7 998.0 609.4 1004.0 611.5" fill="none" stroke="#ffffff" stroke-width="10"/><path d="M479.0 642.0 L479.0 658.0" stroke="#fff" stroke-width="2.500" fill="none"/><path d="M197.0 656.0 C204.2 654.2 225.0 648.3 240.0 645.0 C255.0 641.7 272.0 638.2 287.0 636.0 C302.0 633.8 316.8 633.0 330.0 632.0 C343.2 631.0 349.3 630.2 366.0 630.0 C382.7 629.8 411.0 630.7 430.0 631.0 C449.0 631.3 466.7 631.7 480.0 632.0 C493.3 632.3 493.3 632.4 510.0 633.0 C526.7 633.6 563.3 634.9 580.0 635.5 C596.7 636.1 598.0 636.1 610.0 636.8 C622.0 637.5 637.8 638.6 652.0 639.5 C666.2 640.4 683.7 641.6 695.0 642.0 C706.3 642.4 712.5 642.2 720.0 642.0 C727.5 641.8 731.0 642.2 740.0 640.5 C749.0 638.8 762.8 636.5 774.0 632.0 C785.2 627.5 795.8 619.6 807.0 613.8 C818.2 608.0 829.7 602.8 841.0 597.0 C852.3 591.2 863.8 584.5 875.0 579.2 C886.2 573.9 899.7 568.2 908.0 565.0 C916.3 561.8 920.2 561.0 925.0 559.8 C929.8 558.6 932.7 557.9 937.0 558.0 C941.3 558.1 945.8 558.6 951.0 560.7 C956.2 562.8 962.3 566.9 968.0 570.8 C973.7 574.7 979.0 580.3 985.0 584.3 C991.0 588.3 1000.8 593.2 1004.0 595.0" fill="none" stroke="#4a5ccf" stroke-width="2" stroke-dasharray="4 3"/><path d="M450.0 198.0 L432.0 221.0 L421.0 254.0 L416.0 306.0 L394.0 328.0 L320.0 409.0 L230.5 468.0 L242.5 506.0 L367.0 629.5" fill="none" stroke="#e6e8d6" stroke-width="3.500" stroke-linejoin="round" transform="translate(2.500 3.200)"/><path d="M450.0 198.0 L432.0 221.0 L421.0 254.0 L416.0 306.0 L394.0 328.0 L320.0 409.0 L230.5 468.0 L242.5 506.0 L367.0 629.5" fill="none" stroke="#ee8f80" stroke-width="1" stroke-dasharray="1.500 3" stroke-linejoin="round" transform="translate(2.800 3.500)"/><path d="M241.0 506.5 L270.0 505.0 L294.0 503.0 L341.0 493.0 L383.0 478.0 L415.0 467.5 L450.0 455.5" fill="none" stroke="#e6e8d6" stroke-width="3.500" stroke-linejoin="round" transform="translate(2.500 3.200)"/><path d="M241.0 506.5 L270.0 505.0 L294.0 503.0 L341.0 493.0 L383.0 478.0 L415.0 467.5 L450.0 455.5" fill="none" stroke="#ee8f80" stroke-width="1" stroke-dasharray="1.500 3" stroke-linejoin="round" transform="translate(2.800 3.500)"/><text transform="translate(270.0 501.0) rotate(-2)" font-size="9.500" fill="#77779a" stroke="#fff" stroke-width="1.500" stroke-opacity="0.700" paint-order="stroke" font-family="Liberation Sans, sans-serif">Bur</text><path d="M330.0 -5.0 L456.0 46.3" fill="none" stroke="#c80a14" stroke-width="7.500" stroke-linejoin="round" stroke-linecap="round"/><path d="M450.0 198.0 L432.0 221.0 L421.0 254.0 L416.0 306.0 L394.0 328.0 L320.0 409.0 L230.5 468.0 L242.5 506.0 L367.0 629.5" fill="none" stroke="#c80a14" stroke-width="7.500" stroke-linejoin="round" stroke-linecap="round"/><path d="M241.0 506.5 L270.0 505.0 L294.0 503.0 L341.0 493.0 L383.0 478.0 L415.0 467.5 L450.0 455.5" fill="none" stroke="#c80a14" stroke-width="7.500" stroke-linejoin="round" stroke-linecap="round"/><path d="M937.4 554.0 L937.4 593.0" fill="none" stroke="#c80a14" stroke-width="7.500" stroke-linejoin="round" stroke-linecap="round"/><path d="M330.0 -5.0 L456.0 46.3" fill="none" stroke="#240000" stroke-width="2" stroke-linejoin="round" stroke-linecap="butt"/><path d="M450.0 198.0 L432.0 221.0 L421.0 254.0 L416.0 306.0 L394.0 328.0 L320.0 409.0 L230.5 468.0 L242.5 506.0 L367.0 629.5" fill="none" stroke="#240000" stroke-width="2" stroke-linejoin="round" stroke-linecap="butt"/><path d="M241.0 506.5 L270.0 505.0 L294.0 503.0 L341.0 493.0 L383.0 478.0 L415.0 467.5 L450.0 455.5" fill="none" stroke="#240000" stroke-width="2" stroke-linejoin="round" stroke-linecap="butt"/><path d="M937.4 554.0 L937.4 593.0" fill="none" stroke="#240000" stroke-width="2" stroke-linejoin="round" stroke-linecap="butt"/><circle cx="384.3" cy="348.5" r="4.200" fill="#e5b73c" stroke="#3d3512" stroke-width="1.100"/><circle cx="384.3" cy="356.5" r="4.200" fill="#e5b73c" stroke="#3d3512" stroke-width="1.100"/><circle cx="389.6" cy="357.3" r="4.200" fill="#e5b73c" stroke="#3d3512" stroke-width="1.100"/><circle cx="369.7" cy="393.0" r="4.200" fill="#e5b73c" stroke="#3d3512" stroke-width="1.100"/><circle cx="368.0" cy="398.3" r="4.200" fill="#e5b73c" stroke="#3d3512" stroke-width="1.100"/><circle cx="334.1" cy="401.0" r="4.200" fill="#e5b73c" stroke="#3d3512" stroke-width="1.100"/><circle cx="341.5" cy="417.3" r="4.200" fill="#e5b73c" stroke="#3d3512" stroke-width="1.100"/><circle cx="294.8" cy="433.6" r="4.200" fill="#e5b73c" stroke="#3d3512" stroke-width="1.100"/><circle cx="257.4" cy="444.1" r="4.200" fill="#e5b73c" stroke="#3d3512" stroke-width="1.100"/><circle cx="255.6" cy="454.7" r="4.200" fill="#e5b73c" stroke="#3d3512" stroke-width="1.100"/><circle cx="258.7" cy="452.5" r="4.200" fill="#e5b73c" stroke="#3d3512" stroke-width="1.100"/><circle cx="290.4" cy="453.8" r="4.200" fill="#e5b73c" stroke="#3d3512" stroke-width="1.100"/><circle cx="238.0" cy="465.7" r="4.200" fill="#e5b73c" stroke="#3d3512" stroke-width="1.100"/><circle cx="345.9" cy="467.0" r="4.200" fill="#e5b73c" stroke="#3d3512" stroke-width="1.100"/><circle cx="413.8" cy="461.3" r="4.200" fill="#e5b73c" stroke="#3d3512" stroke-width="1.100"/><circle cx="419.5" cy="465.3" r="4.200" fill="#e5b73c" stroke="#3d3512" stroke-width="1.100"/><circle cx="437.6" cy="464.4" r="4.200" fill="#e5b73c" stroke="#3d3512" stroke-width="1.100"/><circle cx="306.3" cy="475.0" r="4.200" fill="#e5b73c" stroke="#3d3512" stroke-width="1.100"/><circle cx="271.5" cy="484.2" r="4.200" fill="#e5b73c" stroke="#3d3512" stroke-width="1.100"/><circle cx="304.5" cy="486.0" r="4.200" fill="#e5b73c" stroke="#3d3512" stroke-width="1.100"/><circle cx="308.9" cy="489.5" r="4.200" fill="#e5b73c" stroke="#3d3512" stroke-width="1.100"/><circle cx="254.8" cy="489.1" r="4.200" fill="#e5b73c" stroke="#3d3512" stroke-width="1.100"/><circle cx="264.0" cy="493.9" r="4.200" fill="#e5b73c" stroke="#3d3512" stroke-width="1.100"/><circle cx="340.7" cy="489.9" r="4.200" fill="#e5b73c" stroke="#3d3512" stroke-width="1.100"/><circle cx="367.5" cy="482.4" r="4.200" fill="#e5b73c" stroke="#3d3512" stroke-width="1.100"/><circle cx="379.9" cy="478.9" r="4.200" fill="#e5b73c" stroke="#3d3512" stroke-width="1.100"/><circle cx="357.4" cy="496.1" r="4.200" fill="#e5b73c" stroke="#3d3512" stroke-width="1.100"/><circle cx="341.1" cy="499.2" r="4.200" fill="#e5b73c" stroke="#3d3512" stroke-width="1.100"/><circle cx="292.2" cy="500.1" r="4.200" fill="#e5b73c" stroke="#3d3512" stroke-width="1.100"/><circle cx="296.2" cy="497.4" r="4.200" fill="#e5b73c" stroke="#3d3512" stroke-width="1.100"/><circle cx="271.1" cy="504.0" r="4.200" fill="#e5b73c" stroke="#3d3512" stroke-width="1.100"/><circle cx="253.0" cy="506.7" r="4.200" fill="#e5b73c" stroke="#3d3512" stroke-width="1.100"/><circle cx="300.6" cy="508.4" r="4.200" fill="#e5b73c" stroke="#3d3512" stroke-width="1.100"/><circle cx="325.7" cy="507.6" r="4.200" fill="#e5b73c" stroke="#3d3512" stroke-width="1.100"/><circle cx="243.3" cy="516.4" r="4.200" fill="#e5b73c" stroke="#3d3512" stroke-width="1.100"/><circle cx="253.4" cy="537.5" r="4.200" fill="#e5b73c" stroke="#3d3512" stroke-width="1.100"/><circle cx="258.7" cy="545.9" r="4.200" fill="#e5b73c" stroke="#3d3512" stroke-width="1.100"/><circle cx="274.1" cy="545.9" r="4.200" fill="#e5b73c" stroke="#3d3512" stroke-width="1.100"/><circle cx="290.0" cy="559.1" r="4.200" fill="#e5b73c" stroke="#3d3512" stroke-width="1.100"/><circle cx="308.5" cy="575.4" r="4.200" fill="#e5b73c" stroke="#3d3512" stroke-width="1.100"/><circle cx="434.2" cy="219.2" r="4.200" fill="#e5b73c" stroke="#3d3512" stroke-width="1.100"/><circle cx="410.0" cy="244.2" r="4.200" fill="#e5b73c" stroke="#3d3512" stroke-width="1.100"/><circle cx="422.3" cy="254.9" r="4.200" fill="#e5b73c" stroke="#3d3512" stroke-width="1.100"/><circle cx="417.3" cy="277.6" r="4.200" fill="#e5b73c" stroke="#3d3512" stroke-width="1.100"/><circle cx="429.6" cy="304.2" r="4.200" fill="#e5b73c" stroke="#3d3512" stroke-width="1.100"/><text transform="translate(269.0 531.5) rotate(42.5)" font-size="15" fill="#000" font-family="Liberation Sans, sans-serif" textLength="101" lengthAdjust="spacingAndGlyphs">Strasse &amp; Wege</text></g></svg>
<div class="a" style="left:735.5px;top:69px;width:814px;height:660px;background:#f0f0f0;border:1px solid #a0a0a0;border-top-color:#6a6a6a;box-shadow:0 2px 9px 1px rgba(0,0,0,0.200);"></div>
<div class="a" style="left:737px;top:70px;width:812px;height:31px;background:#ffffff;"></div>
<svg class="a" style="left:743px;top:77px;" width="17" height="17" viewBox="0 0 17 17"><circle cx="8" cy="8" r="5.400" fill="none" stroke="#6aa32d" stroke-width="3.200"/>
<path d="M9.500 9.500 L16 16" stroke="#4d8a23" stroke-width="3.200"/>
<path d="M7.500 7.500 L11.500 11.500" stroke="#f0c02c" stroke-width="2.200" stroke-linecap="round"/>
<circle cx="7.300" cy="7.300" r="1.400" fill="#ee7913"/></svg>
<span class="t" id="t52" style="left:764px;top:75px;font-size:13px;color:#222;transform:scaleX(0.9302);transform-origin:0 50%;">Verschneidung</span>
<svg class="a" style="left:1525px;top:79px;" width="13" height="13" viewBox="0 0 13 13"><path d="M1 1l10.500 10.500M11.500 1L1 11.500" stroke="#222" stroke-width="1.200"/></svg>
<div class="a" style="left:747px;top:130px;width:563px;height:509px;background:#f0f0f0;border:1px solid #dcdcdc;border-bottom-color:#fafafa;border-right-color:#fafafa;"></div>
<div class="a" style="left:748px;top:131px;width:561px;height:1px;background:#fff;"></div>
<div class="a" style="left:823px;top:114px;width:63px;height:17px;background:#f0f0f0;border:1px solid #d9d9d9;border-bottom:none;"></div>
<div class="a" style="left:747px;top:112px;width:76px;height:20px;background:#ffffff;border:1px solid #d9d9d9;border-bottom:none;"></div>
<span class="t" id="t53" style="left:759px;top:112.5px;font-size:11px;color:#000;transform:scaleX(0.9804);transform-origin:0 50%;">Parameter</span>
<span class="t" id="t54" style="left:834.5px;top:112.5px;font-size:11px;color:#000;transform:scaleX(0.9535);transform-origin:0 50%;">Protokoll</span>
<span class="t" id="t55" style="left:752px;top:133px;font-size:11px;color:#000;transform:scaleX(0.9375);transform-origin:0 50%;">Eingabelayer</span>
<div class="a" style="left:752px;top:155px;width:463px;height:21px;background:#e1e1e1;border:1px solid #adadad;"></div>
<span class="t" id="t56" style="left:775px;top:156px;font-size:11px;color:#000;transform:scaleX(0.9508);transform-origin:0 50%;">Funde_WT_2017_2019 [EPSG:4326]</span>
<svg class="a" style="left:1200px;top:163px;" width="11" height="7" viewBox="0 0 11 7"><path d="M1.500 1L5.500 5L9.500 1" fill="none" stroke="#333" stroke-width="1.100"/></svg>
<svg class="a" style="left:1222px;top:155px;" width="22" height="22" viewBox="0 0 22 22"><g fill="none" stroke-linejoin="round" stroke-linecap="butt">
<path d="M9.300 6.800H6.800a2 2 0 0 0-2 2v5a2 2 0 0 0 2 2h3" stroke="#5aa35a" stroke-width="3.700"/>
<path d="M9.300 12.300l4.600 3.500l-4.600 3.500z" fill="#5aa35a" stroke="#5aa35a" stroke-width="1"/>
<path d="M14.500 15.800h2.500a2 2 0 0 0 2-2v-5a2 2 0 0 0-2-2h-3" stroke="#5aa35a" stroke-width="3.700"/>
<path d="M14.500 3.300l-4.600 3.500l4.600 3.500z" fill="#5aa35a" stroke="#5aa35a" stroke-width="1"/>
<path d="M9.300 6.800H6.800a2 2 0 0 0-2 2v5a2 2 0 0 0 2 2h3" stroke="#8cc884" stroke-width="2.200"/>
<path d="M9.600 13.500l3 2.300l-3 2.300z" fill="#8cc884" stroke="none"/>
<path d="M14.500 15.800h2.500a2 2 0 0 0 2-2v-5a2 2 0 0 0-2-2h-3" stroke="#8cc884" stroke-width="2.200"/>
<path d="M14.200 4.500l-3 2.300l3 2.300z" fill="#8cc884" stroke="none"/></g></svg>
<svg class="a" style="left:1254px;top:155px;" width="22" height="22" viewBox="0 0 22 22"><path d="M10.500 9.500l9.300 8.600a1.700 1.700 0 0 1-2.600 2.600L8.600 11.800z" fill="#efd486" stroke="#4a3c14" stroke-width="0.900" stroke-linejoin="round"/>
<path d="M8.600 11.800l1.900-2.300l2.200 2l-2 2.200z" fill="#3a3a3a"/>
<path d="M2.300 6.300a4.300 4.300 0 0 1 5-3.800L5.200 5l.6 2.400l2.400.6l2.300-2.200a4.300 4.300 0 0 1-5.600 5.200a4.300 4.300 0 0 1-2.600-4.700z" fill="#ececec" stroke="#5a5a5a" stroke-width="0.900" stroke-linejoin="round"/></svg>
<div class="a" style="left:1284px;top:156.5px;width:20px;height:16px;background:#e1e1e1;border:1px solid #adadad;"></div>
<div class="a" style="left:1291px;top:166.5px;width:1.5px;height:1.5px;background:#111;"></div>
<div class="a" style="left:1294px;top:166.5px;width:1.5px;height:1.5px;background:#111;"></div>
<div class="a" style="left:1297px;top:166.5px;width:1.5px;height:1.5px;background:#111;"></div>
<svg class="a" style="left:1295px;top:165.5px;" width="8" height="5" viewBox="0 0 8 5"><path d="M0.5 0.5h6l-3 3.500z" fill="#111"/></svg>
<div class="a" style="left:752px;top:225px;width:463px;height:21px;background:#e1e1e1;border:1px solid #adadad;"></div>
<span class="t" id="t57" style="left:775px;top:226px;font-size:11px;color:#000;transform:scaleX(0.9670);transform-origin:0 50%;">puffer_3m_strasse_wege [EPSG:25832]</span>
<svg class="a" style="left:1200px;top:233px;" width="11" height="7" viewBox="0 0 11 7"><path d="M1.500 1L5.500 5L9.500 1" fill="none" stroke="#333" stroke-width="1.100"/></svg>
<svg class="a" style="left:1222px;top:225px;" width="22" height="22" viewBox="0 0 22 22"><g fill="none" stroke-linejoin="round" stroke-linecap="butt">
<path d="M9.300 6.800H6.800a2 2 0 0 0-2 2v5a2 2 0 0 0 2 2h3" stroke="#5aa35a" stroke-width="3.700"/>
<path d="M9.300 12.300l4.600 3.500l-4.600 3.500z" fill="#5aa35a" stroke="#5aa35a" stroke-width="1"/>
<path d="M14.500 15.800h2.500a2 2 0 0 0 2-2v-5a2 2 0 0 0-2-2h-3" stroke="#5aa35a" stroke-width="3.700"/>
<path d="M14.500 3.300l-4.600 3.500l4.600 3.500z" fill="#5aa35a" stroke="#5aa35a" stroke-width="1"/>
<path d="M9.300 6.800H6.800a2 2 0 0 0-2 2v5a2 2 0 0 0 2 2h3" stroke="#8cc884" stroke-width="2.200"/>
<path d="M9.600 13.500l3 2.300l-3 2.300z" fill="#8cc884" stroke="none"/>
<path d="M14.500 15.800h2.500a2 2 0 0 0 2-2v-5a2 2 0 0 0-2-2h-3" stroke="#8cc884" stroke-width="2.200"/>
<path d="M14.200 4.500l-3 2.300l3 2.300z" fill="#8cc884" stroke="none"/></g></svg>
<svg class="a" style="left:1254px;top:225px;" width="22" height="22" viewBox="0 0 22 22"><path d="M10.500 9.500l9.300 8.600a1.700 1.700 0 0 1-2.600 2.600L8.600 11.800z" fill="#efd486" stroke="#4a3c14" stroke-width="0.900" stroke-linejoin="round"/>
<path d="M8.600 11.800l1.900-2.300l2.200 2l-2 2.200z" fill="#3a3a3a"/>
<path d="M2.300 6.300a4.300 4.300 0 0 1 5-3.800L5.200 5l.6 2.400l2.400.6l2.300-2.200a4.300 4.300 0 0 1-5.600 5.200a4.300 4.300 0 0 1-2.600-4.700z" fill="#ececec" stroke="#5a5a5a" stroke-width="0.900" stroke-linejoin="round"/></svg>
<div class="a" style="left:1284px;top:226.5px;width:20px;height:16px;background:#e1e1e1;border:1px solid #adadad;"></div>
<div class="a" style="left:1291px;top:236.5px;width:1.5px;height:1.5px;background:#111;"></div>
<div class="a" style="left:1294px;top:236.5px;width:1.5px;height:1.5px;background:#111;"></div>
<div class="a" style="left:1297px;top:236.5px;width:1.5px;height:1.5px;background:#111;"></div>
<svg class="a" style="left:1295px;top:235.5px;" width="8" height="5" viewBox="0 0 8 5"><path d="M0.5 0.5h6l-3 3.500z" fill="#111"/></svg>
<svg class="a" style="left:757px;top:158px;" width="14" height="16" viewBox="0 0 14 16"><circle cx="4.500" cy="7" r="1.300" fill="#bbb" stroke="#8a8a8a" stroke-width="0.600"/><circle cx="10" cy="3" r="1.300" fill="#bbb" stroke="#8a8a8a" stroke-width="0.600"/><circle cx="3" cy="12.500" r="1.300" fill="#bbb" stroke="#8a8a8a" stroke-width="0.600"/></svg>
<svg class="a" style="left:755px;top:228px;" width="18" height="15" viewBox="0 0 18 15"><path d="M2 3.500c3-2.200 5 .5 7.500 0s4-2 6.500-.5v8c-2.500-1.800-4.500 0-7 0s-4-1-7 .5z" fill="#e9e9e9" stroke="#8a8a8a" stroke-width="1.100" stroke-linejoin="round"/></svg>
<div class="a" style="left:752px;top:185px;width:13px;height:13px;background:#ffffff;border:1px solid #d4d4d4;"></div>
<span class="t" id="t58" style="left:770.5px;top:182px;font-size:11px;color:#838383;transform:scaleX(0.9595);transform-origin:0 50%;">Nur gewählte Symbole</span>
<div class="a" style="left:752px;top:255px;width:13px;height:13px;background:#ffffff;border:1px solid #d4d4d4;"></div>
<span class="t" id="t59" style="left:770.5px;top:252px;font-size:11px;color:#838383;transform:scaleX(0.9595);transform-origin:0 50%;">Nur gewählte Symbole</span>
<span class="t" id="t60" style="left:752px;top:203px;font-size:11px;color:#000;transform:scaleX(0.9639);transform-origin:0 50%;">Layer überlagern</span>
<span class="t" id="t61" style="left:752px;top:273px;font-size:11px;color:#000;transform:scaleX(0.9770);transform-origin:0 50%;">Beizubehaltendes Eingabefelder (leer belassen, wenn alle Felder beibehalten werden sollen) [optional]</span>
<span class="t" id="t62" style="left:752px;top:316px;font-size:11px;color:#000;transform:scaleX(0.9793);transform-origin:0 50%;">Beizubehaltendes Überlagerungsfelder (leer belassen, wenn alle Felder beibehalten werden sollen) [optional]</span>
<div class="a" style="left:752px;top:296px;width:525px;height:17px;background:#f0f0f0;border:1px solid #d6d6d6;"></div>
<span class="t" id="t63" style="left:755px;top:294.5px;font-size:11px;color:#7a7a7a;transform:scaleX(0.9632);transform-origin:0 50%;">0 Optionen gewählt</span>
<div class="a" style="left:1284px;top:297px;width:21px;height:15px;background:#e1e1e1;border:1px solid #adadad;"></div>
<div class="a" style="left:1290px;top:306px;width:1.5px;height:1.5px;background:#111;"></div>
<div class="a" style="left:1293px;top:306px;width:1.5px;height:1.5px;background:#111;"></div>
<div class="a" style="left:1296px;top:306px;width:1.5px;height:1.5px;background:#111;"></div>
<div class="a" style="left:752px;top:340px;width:525px;height:17px;background:#f0f0f0;border:1px solid #d6d6d6;"></div>
<span class="t" id="t64" style="left:755px;top:338.5px;font-size:11px;color:#7a7a7a;transform:scaleX(0.9632);transform-origin:0 50%;">0 Optionen gewählt</span>
<div class="a" style="left:1284px;top:341px;width:21px;height:15px;background:#e1e1e1;border:1px solid #adadad;"></div>
<div class="a" style="left:1290px;top:350px;width:1.5px;height:1.5px;background:#111;"></div>
<div class="a" style="left:1293px;top:350px;width:1.5px;height:1.5px;background:#111;"></div>
<div class="a" style="left:1296px;top:350px;width:1.5px;height:1.5px;background:#111;"></div>
<svg class="a" style="left:756px;top:365px;" width="8" height="10" viewBox="0 0 8 10"><path d="M1 0.500L7 5L1 9.500z" fill="#111"/></svg>
<span class="t" id="t65" style="left:769.5px;top:360px;font-size:11px;color:#000;font-weight:bold;transform:scaleX(1.0556);transform-origin:0 50%;">Fortgeschrittene Parameter</span>
<span class="t" id="t66" style="left:752px;top:384px;font-size:11px;color:#000;transform:scaleX(0.9521);transform-origin:0 50%;">Verschneidung</span>
<div class="a" style="left:752px;top:406px;width:525px;height:18px;background:#fff;border:1px solid #adadad;"></div>
<span class="t" id="t67" style="left:754px;top:405px;font-size:11px;color:#8a8a8a;transform:scaleX(1.0120);transform-origin:0 50%;">[Temporärlayer erzeugen]</span>
<div class="a" style="left:1284px;top:407px;width:20px;height:16px;background:#e5f1fb;border:1px solid #0078d7;"></div>
<div class="a" style="left:1291px;top:417px;width:1.5px;height:1.5px;background:#111;"></div>
<div class="a" style="left:1294px;top:417px;width:1.5px;height:1.5px;background:#111;"></div>
<div class="a" style="left:1297px;top:417px;width:1.5px;height:1.5px;background:#111;"></div>
<svg class="a" style="left:1295px;top:416px;" width="8" height="5" viewBox="0 0 8 5"><path d="M0.5 0.5h6l-3 3.500z" fill="#111"/></svg>
<div class="a" style="left:752px;top:431.5px;width:13px;height:13px;background:#fff;border:1px solid #333;"></div>
<svg class="a" style="left:752px;top:431.5px;" width="13" height="13" viewBox="0 0 13 13"><path d="M2.500 6.500L5.300 9.300L10.500 3.500" fill="none" stroke="#222" stroke-width="1.200"/></svg>
<span class="t" id="t68" style="left:770.5px;top:428.5px;font-size:11px;color:#000;transform:scaleX(0.9756);transform-origin:0 50%;">Öffne Ausgabedatei nach erfolgreicher Ausführung</span>
<svg class="a" style="left:1312px;top:112px;" width="8" height="9" viewBox="0 0 8 9"><path d="M6 1v7L1.500 4.500z" fill="#111"/></svg>
<div class="a" style="left:1325px;top:112px;width:213px;height:528px;background:#fff;border:1px solid #9b9b9b;"></div>
<span class="t" id="t69" style="left:1329.5px;top:116.5px;font-size:17px;color:#444;font-weight:bold;transform:scaleX(1.0328);transform-origin:0 50%;">Verschneidung</span>
<span class="t" id="t70" style="left:1329.5px;top:143.0px;font-size:11px;color:#6a6a6a;transform:scaleX(0.9736);transform-origin:0 50%;">Diese Algorithmus extrahiert überlappende</span>
<span class="t" id="t71" style="left:1329.5px;top:156.3px;font-size:11px;color:#6a6a6a;transform:scaleX(0.9766);transform-origin:0 50%;">Teile von Objekten in dem Ein- und</span>
<span class="t" id="t72" style="left:1329.5px;top:169.6px;font-size:11px;color:#6a6a6a;transform:scaleX(0.9754);transform-origin:0 50%;">Überlagerungslayer. Den Objekten im</span>
<span class="t" id="t73" style="left:1329.5px;top:182.9px;font-size:11px;color:#6a6a6a;transform:scaleX(0.9799);transform-origin:0 50%;">Ausgabeschnittlayer werden die Attribute</span>
<span class="t" id="t74" style="left:1329.5px;top:196.2px;font-size:11px;color:#6a6a6a;transform:scaleX(0.9791);transform-origin:0 50%;">der überlappenden Objekte sowohl aus</span>
<span class="t" id="t75" style="left:1329.5px;top:209.5px;font-size:11px;color:#6a6a6a;transform:scaleX(0.9646);transform-origin:0 50%;">dem Ein- als auch dem Überlagerungslayer</span>
<span class="t" id="t76" style="left:1329.5px;top:222.8px;font-size:11px;color:#6a6a6a;transform:scaleX(0.9590);transform-origin:0 50%;">zugewiesen.</span>
<div class="a" style="left:747px;top:667.5px;width:675px;height:19.5px;background:#e6e6e6;border:1px solid #bcbcbc;"></div>
<span class="t" id="t77" style="left:1430px;top:667.5px;font-size:11px;color:#000;transform:scaleX(1.0000);transform-origin:0 50%;">0%</span>
<div class="a" style="left:1461px;top:667px;width:76px;height:21px;background:#cccccc;border:1px solid #bfbfbf;"></div>
<span class="t" id="t78" style="left:1472.5px;top:667.5px;font-size:11px;color:#8a8a8a;transform:scaleX(1.0000);transform-origin:0 50%;">Abbrechen</span>
<div class="a" style="left:747px;top:696px;width:132px;height:21px;background:#e1e1e1;border:1px solid #adadad;"></div>
<span class="t" id="t79" style="left:750.0px;top:696.5px;font-size:11px;color:#000;transform:scaleX(0.9618);transform-origin:0 50%;">Als Batchprozess starten...</span>
<div class="a" style="left:1295px;top:696px;width:76px;height:21px;background:#e1e1e1;border:2px solid #0078d7;"></div>
<span class="t" id="t80" style="left:1325.5px;top:696.5px;font-size:11px;color:#000;transform:scaleX(0.8333);transform-origin:0 50%;">Los</span>
<div class="a" style="left:1378px;top:696px;width:76px;height:21px;background:#e1e1e1;border:1px solid #adadad;"></div>
<span class="t" id="t81" style="left:1393.0px;top:696.5px;font-size:11px;color:#000;transform:scaleX(0.9388);transform-origin:0 50%;">Schließen</span>
<div class="a" style="left:1461px;top:696px;width:76px;height:21px;background:#e1e1e1;border:1px solid #adadad;"></div>
<span class="t" id="t82" style="left:1488.0px;top:696.5px;font-size:11px;color:#000;transform:scaleX(1.0000);transform-origin:0 50%;">Hilfe</span>
<div class="a" style="left:1284px;top:425px;width:239px;height:111px;background:#f2f2f2;border:1px solid #a0a0a0;box-shadow:3px 3px 4px rgba(0,0,0,0.35);"></div>
<div class="a" style="left:1287px;top:447px;width:232px;height:19px;background:#91c9f7;"></div>
<span class="t" id="t83" style="left:1314px;top:427.5px;font-size:12.5px;color:#000;transform:scaleX(0.9777);transform-origin:0 50%;">Temporären Layer erzeugen</span>
<span class="t" id="t84" style="left:1314px;top:447px;font-size:12.5px;color:#000;transform:scaleX(0.9558);transform-origin:0 50%;">In Datei speichern…</span>
<span class="t" id="t85" style="left:1314px;top:467.5px;font-size:12.5px;color:#000;transform:scaleX(0.9304);transform-origin:0 50%;">Speichere in GeoPackage…</span>
<span class="t" id="t86" style="left:1314px;top:487.5px;font-size:12.5px;color:#000;transform:scaleX(0.9724);transform-origin:0 50%;">In Datenbanktabelle speichern…</span>
<div class="a" style="left:1311px;top:510px;width:207px;height:1px;background:#d0d0d0;"></div>
<span class="t" id="t87" style="left:1314px;top:515px;font-size:12.5px;color:#000;transform:scaleX(0.9740);transform-origin:0 50%;">Dateikodierung ändern (System)…</span>
<div class="a" style="left:738px;top:130px;width:237px;height:53px;border:3px solid #e3000b;"></div>
<div class="a" style="left:738px;top:201px;width:239px;height:53px;border:3px solid #e3000b;"></div>
<svg class="a" style="left:0px;top:0px;pointer-events:none;" width="1600" height="858" viewBox="0 0 1600 858"><ellipse cx="1294.500" cy="413.500" rx="24.500" ry="23.500" fill="none" stroke="#e3000b" stroke-width="3"/>
<ellipse cx="757.500" cy="437.500" rx="23.500" ry="23.500" fill="none" stroke="#e3000b" stroke-width="3"/>
<path d="M1273 428C1262 438 1250 446 1250 453C1250 460 1264 461 1281 460.500" fill="none" stroke="#e3000b" stroke-width="1.700"/>
<path d="M1277 455.500L1297 460.500L1277 466L1281 460.500z" fill="#e3000b"/>
<path d="M1395.500 463.500v15l3.500-3.300l2.400 5.200l2.300-1l-2.400-5.200h5z" fill="#8a12c8" stroke="#3b0a5c" stroke-width="0.800"/>
</svg>
<div class="a" style="left:925px;top:748px;width:92px;height:44px;background:#ffff88;border:1px solid #222;border-radius:10px;"></div>
<span class="t" id="t88" style="left:945.5px;top:760.5px;font-size:16px;color:#000;font-weight:bold;transform:scaleX(0.9712);transform-origin:0 50%;">Bild 21</span>
</body></html>
